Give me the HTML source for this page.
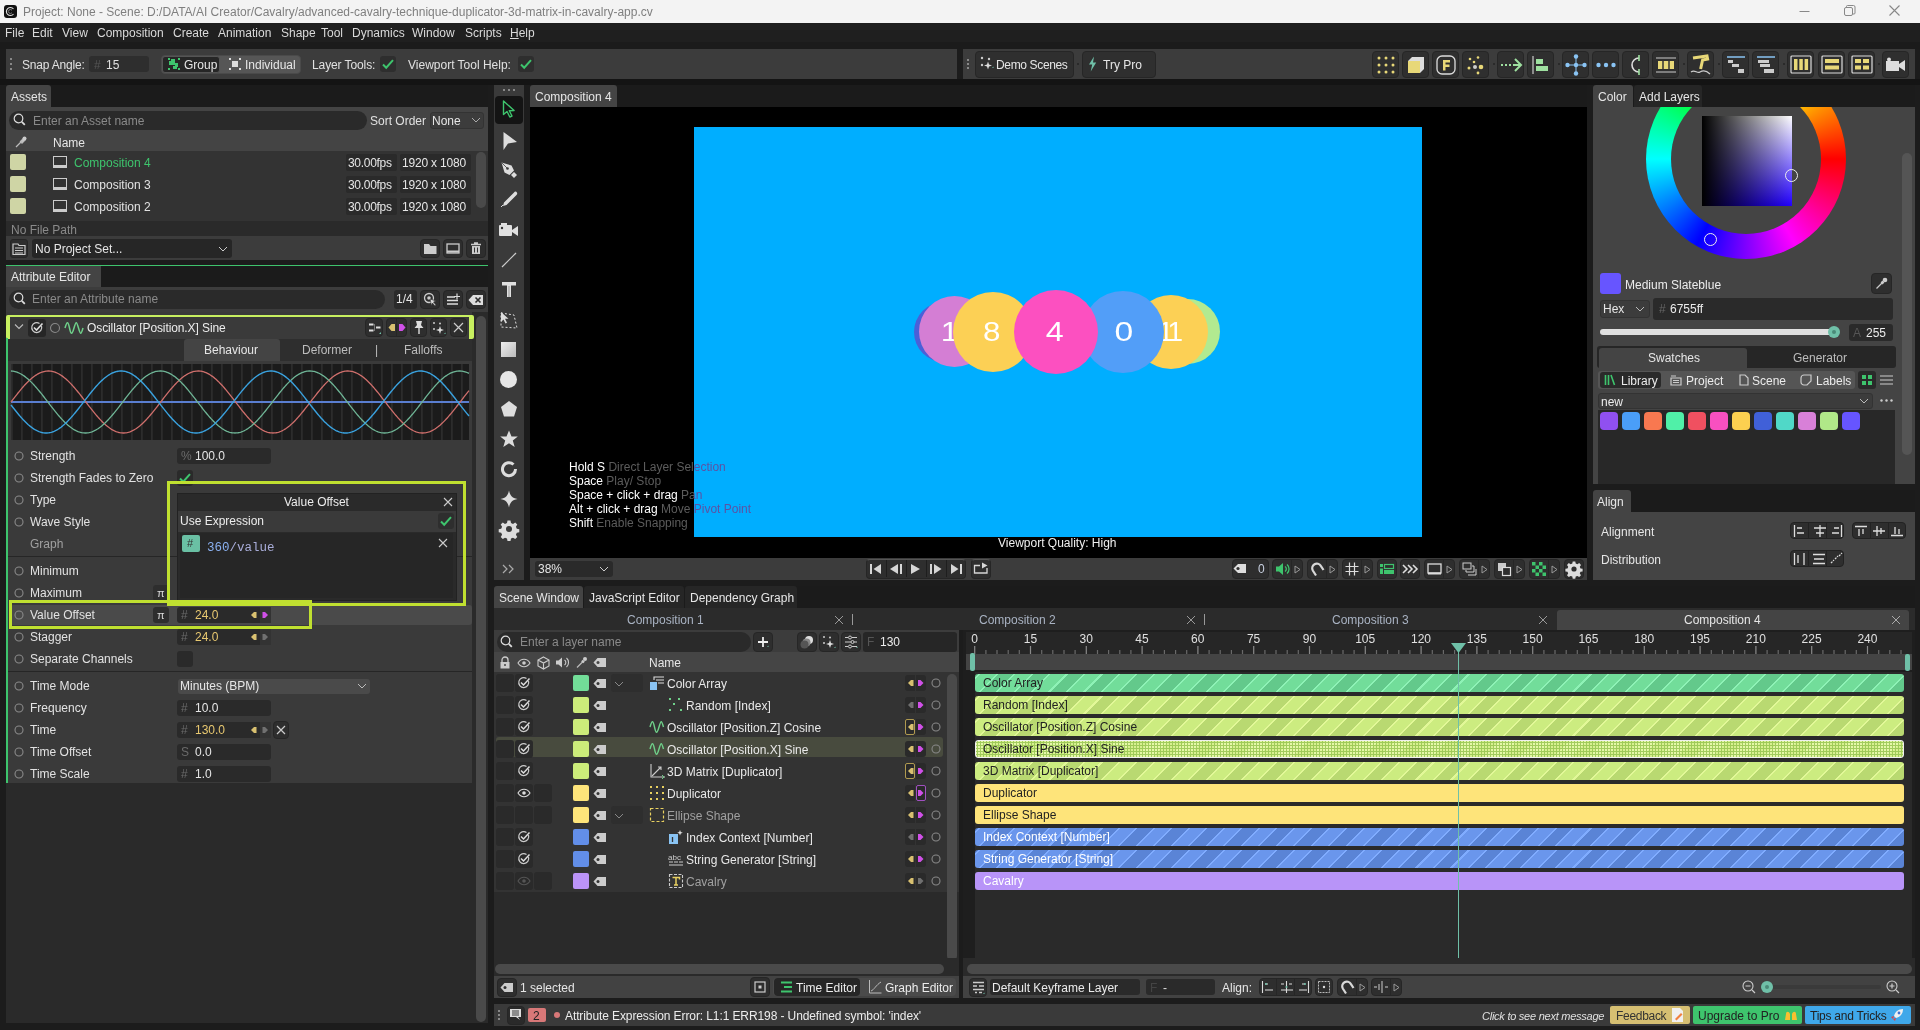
<!DOCTYPE html>
<html><head><meta charset="utf-8">
<style>
*{box-sizing:border-box;margin:0;padding:0}
html,body{width:1920px;height:1030px;overflow:hidden;background:#1c1c1c;font-family:"Liberation Sans",sans-serif;font-size:12px;color:#e2e2e2}
.a{position:absolute}
.t{position:absolute;white-space:nowrap;line-height:16px}
.dim{color:#8c8c8c}
.btn{position:absolute;background:#2e2e2e;border:1px solid #262626;border-radius:4px}
.inp{position:absolute;background:#2a2a2a;border-radius:3px}
svg{position:absolute;overflow:visible}
</style></head><body>

<!-- TITLE BAR -->
<div class="a" style="left:0;top:0;width:1920px;height:23px;background:#f3f3f3"></div>
<div class="a" style="left:4px;top:5px;width:13px;height:13px;background:#111;border-radius:3px"></div>
<svg style="left:5px;top:6px" width="11" height="11"><path d="M8.5 3a4 4 0 1 0 0 5" fill="none" stroke="#ddd" stroke-width="1.1"/><path d="M7 4.3a2 2 0 1 0 0 2.4" fill="none" stroke="#999" stroke-width="0.8"/></svg>
<div class="t" style="left:23px;top:4px;color:#7f7f7f;font-size:12px">Project: None - Scene: D:/DATA/AI Creator/Cavalry/advanced-cavalry-technique-duplicator-3d-matrix-in-cavalry-app.cv</div>

<!-- MENU -->
<div class="a" style="left:0;top:23px;width:1920px;height:19px;background:#1f1f1f"></div>
<div class="a" style="left:0;top:42px;width:1920px;height:7px;background:#1b1b1b"></div>
<div class="t" style="left:5px;top:25px;color:#dadada">File</div>
<div class="t" style="left:32px;top:25px;color:#dadada">Edit</div>
<div class="t" style="left:62px;top:25px;color:#dadada">View</div>
<div class="t" style="left:97px;top:25px;color:#dadada">Composition</div>
<div class="t" style="left:173px;top:25px;color:#dadada">Create</div>
<div class="t" style="left:218px;top:25px;color:#dadada">Animation</div>
<div class="t" style="left:281px;top:25px;color:#dadada">Shape</div>
<div class="t" style="left:321px;top:25px;color:#dadada">Tool</div>
<div class="t" style="left:352px;top:25px;color:#dadada">Dynamics</div>
<div class="t" style="left:412px;top:25px;color:#dadada">Window</div>
<div class="t" style="left:465px;top:25px;color:#dadada">Scripts</div>
<div class="t" style="left:510px;top:25px;color:#dadada"><u>H</u>elp</div>
<svg style="left:1799px;top:5px" width="12" height="12"><path d="M0.5 6.5h10" stroke="#888" stroke-width="1"/></svg>
<svg style="left:1843px;top:4px" width="14" height="14"><rect x="1.5" y="3.5" width="8" height="8" rx="1.5" fill="none" stroke="#888"/><path d="M3.5 3.5v-1a1 1 0 0 1 1-1h6a1.5 1.5 0 0 1 1.5 1.5v6a1 1 0 0 1-1 1h-1" fill="none" stroke="#888"/></svg>
<svg style="left:1889px;top:5px" width="12" height="12"><path d="M0.5 0.5l10 10M10.5 0.5l-10 10" stroke="#888" stroke-width="1.1"/></svg>

<div class="a" style="left:0;top:79px;width:1920px;height:6px;background:#141414"></div>

<!-- TOOLBARS -->
<div class="a" style="left:6px;top:49px;width:951px;height:30px;background:#3c3c3c"></div>
<div class="a" style="left:963px;top:49px;width:952px;height:30px;background:#3c3c3c"></div>

<!-- left toolbar content -->
<div class="a" style="left:10px;top:58px;width:2px;height:2px;background:#888"></div>
<div class="a" style="left:10px;top:63px;width:2px;height:2px;background:#888"></div>
<div class="a" style="left:10px;top:68px;width:2px;height:2px;background:#888"></div>
<div class="t" style="left:22px;top:57px;color:#e0e0e0;letter-spacing:-0.2px">Snap Angle:</div>
<div class="inp" style="left:89px;top:56px;width:60px;height:16px;background:#2e2e2e"></div>
<div class="t dim" style="left:94px;top:57px;color:#555">#</div>
<div class="t" style="left:106px;top:57px;color:#e0e0e0">15</div>
<div class="a" style="left:161px;top:55px;width:140px;height:19px;background:#565656;border:1px solid #4a4a4a;border-radius:4px"></div>
<div class="a" style="left:162px;top:56px;width:58px;height:17px;background:#262626;border-radius:3px;border:1px solid #555"></div>
<svg style="left:167px;top:57px" width="14" height="14"><path d="M1 1h2v2h-2zM11 1h2v2h-2zM1 11h2v2h-2zM11 11h2v2h-2z" fill="#3ec46d"/><path d="M4 2h4v2h0v4h-2v0h-4v-4h2z" fill="#3ec46d"/><path d="M8 6h3v4h-1v2h-4v-3h2z" fill="#3ec46d"/></svg>
<div class="t" style="left:184px;top:57px;color:#e6e6e6">Group</div>
<svg style="left:228px;top:57px" width="14" height="14"><path d="M1 1h2v2h-2zM11 1h2v2h-2zM1 11h2v2h-2zM11 11h2v2h-2z" fill="#ddd"/><rect x="4" y="4" width="6" height="6" fill="#ddd"/></svg>
<div class="t" style="left:245px;top:57px;color:#e6e6e6">Individual</div>
<div class="t" style="left:312px;top:57px;color:#e0e0e0;letter-spacing:-0.1px">Layer Tools:</div>
<div class="inp" style="left:380px;top:56px;width:16px;height:16px;background:#2e2e2e"></div>
<svg style="left:380px;top:56px" width="16" height="16"><path d="M3 8.5l3.2 3.2 6.8-7.5" fill="none" stroke="#3ec46d" stroke-width="2"/></svg>
<div class="t" style="left:408px;top:57px;color:#e0e0e0">Viewport Tool Help:</div>
<div class="inp" style="left:518px;top:56px;width:16px;height:16px;background:#2e2e2e"></div>
<svg style="left:518px;top:56px" width="16" height="16"><path d="M3 8.5l3.2 3.2 6.8-7.5" fill="none" stroke="#3ec46d" stroke-width="2"/></svg>

<!-- right toolbar content -->
<div class="a" style="left:967px;top:59px;width:2px;height:2px;background:#888"></div>
<div class="a" style="left:967px;top:63px;width:2px;height:2px;background:#888"></div>
<div class="a" style="left:967px;top:67px;width:2px;height:2px;background:#888"></div>
<div class="btn" style="left:975px;top:51px;width:99px;height:27px;background:#2f2f2f"></div>
<svg style="left:980px;top:56px" width="14" height="16"><circle cx="2" cy="2" r="1.2" fill="#ccc"/><circle cx="9" cy="3" r="1.2" fill="#ccc"/><circle cx="2" cy="9" r="1.2" fill="#ccc"/><path d="M8 5.5l1 3 3 1-3 1-1 3-1-3-3-1 3-1z" fill="#ddd"/><path d="M12 12l1.5-1.5v1.5z" fill="#6fc0a8"/></svg>
<div class="t" style="left:996px;top:57px;color:#e6e6e6;letter-spacing:-0.35px">Demo Scenes</div>
<div class="a" style="left:1077px;top:63px;width:2px;height:2px;background:#2a2a2a"></div>
<div class="btn" style="left:1082px;top:51px;width:74px;height:27px;background:#2f2f2f"></div>
<svg style="left:1088px;top:56px" width="10" height="16"><path d="M6 0.5l-5 8h3.2l-1.5 7 5.5-9h-3.2z" fill="#6fc0a8"/></svg>
<div class="t" style="left:1103px;top:57px;color:#e6e6e6">Try Pro</div>
<div class="btn" style="left:1372px;top:51px;width:27px;height:27px;background:#2f2f2f"></div>
<div class="btn" style="left:1402px;top:51px;width:27px;height:27px;background:#2f2f2f"></div>
<div class="btn" style="left:1432px;top:51px;width:27px;height:27px;background:#2f2f2f"></div>
<div class="btn" style="left:1462px;top:51px;width:27px;height:27px;background:#2f2f2f"></div>
<div class="btn" style="left:1497px;top:51px;width:27px;height:27px;background:#2f2f2f"></div>
<div class="btn" style="left:1527px;top:51px;width:27px;height:27px;background:#2f2f2f"></div>
<div class="btn" style="left:1562px;top:51px;width:27px;height:27px;background:#2f2f2f"></div>
<div class="btn" style="left:1592px;top:51px;width:27px;height:27px;background:#2f2f2f"></div>
<div class="btn" style="left:1622px;top:51px;width:27px;height:27px;background:#2f2f2f"></div>
<div class="btn" style="left:1652px;top:51px;width:27px;height:27px;background:#2f2f2f"></div>
<div class="btn" style="left:1687px;top:51px;width:27px;height:27px;background:#2f2f2f"></div>
<div class="btn" style="left:1722px;top:51px;width:27px;height:27px;background:#2f2f2f"></div>
<div class="btn" style="left:1752px;top:51px;width:27px;height:27px;background:#2f2f2f"></div>
<div class="btn" style="left:1787px;top:51px;width:27px;height:27px;background:#2f2f2f"></div>
<div class="btn" style="left:1818px;top:51px;width:27px;height:27px;background:#2f2f2f"></div>
<div class="btn" style="left:1848px;top:51px;width:27px;height:27px;background:#2f2f2f"></div>
<div class="btn" style="left:1882px;top:51px;width:27px;height:27px;background:#2f2f2f"></div>
<div class="a" style="left:1493px;top:63px;width:2px;height:2px;background:#2a2a2a"></div>
<div class="a" style="left:1558px;top:63px;width:2px;height:2px;background:#2a2a2a"></div>
<div class="a" style="left:1683px;top:63px;width:2px;height:2px;background:#2a2a2a"></div>
<div class="a" style="left:1718px;top:63px;width:2px;height:2px;background:#2a2a2a"></div>
<div class="a" style="left:1783px;top:63px;width:2px;height:2px;background:#2a2a2a"></div>
<div class="a" style="left:1878px;top:63px;width:2px;height:2px;background:#2a2a2a"></div>

<svg style="left:1376px;top:55px" width="20" height="20"><g fill="#e8d878"><circle cx="3" cy="3" r="1.5"/><circle cx="10" cy="3" r="1.5"/><circle cx="17" cy="3" r="1.5"/><circle cx="3" cy="10" r="1.5"/><circle cx="10" cy="10" r="1.5"/><circle cx="17" cy="10" r="1.5"/><circle cx="3" cy="17" r="1.5"/><circle cx="10" cy="17" r="1.5"/><circle cx="17" cy="17" r="1.5"/></g></svg>
<svg style="left:1406px;top:55px" width="20" height="20"><path d="M2 6h12v12h-12z" fill="#e8d878"/><path d="M2 6l4-4h12l-4 4zM14 6l4-4v12l-4 4z" fill="#ddd"/></svg>
<svg style="left:1436px;top:55px" width="20" height="20"><rect x="1" y="1" width="18" height="18" rx="5" fill="none" stroke="#ddd" stroke-width="1.3"/><path d="M7 5h7v2.5h-4.5v2h4v2.5h-4v3.5h-2.5z" fill="#e8d878"/></svg>
<svg style="left:1466px;top:55px" width="20" height="20"><g fill="#e8d878"><circle cx="4" cy="4" r="1.3"/><circle cx="12" cy="2.5" r="1.3"/><circle cx="8" cy="7" r="1.3"/><circle cx="3" cy="13" r="1.5"/><circle cx="15" cy="12" r="2.3"/><circle cx="12" cy="18" r="1.4"/></g><circle cx="9" cy="12" r="2" fill="#ccc"/></svg>
<svg style="left:1500px;top:55px" width="22" height="20"><path d="M1 10h2M5 10h2M9 10h2M13 10h7M15 4l6 6-6 6" fill="none" stroke="#9ee0a0" stroke-width="2"/></svg>
<svg style="left:1531px;top:55px" width="20" height="20"><path d="M2 1v18" stroke="#ccc" stroke-width="1.2"/><path d="M5 4h7v5h-7zM5 11h12v5h-12z" fill="#9ee0a0"/></svg>
<svg style="left:1565px;top:54px" width="22" height="22"><g fill="#8ac4f4"><circle cx="11" cy="2.5" r="2.2"/><circle cx="11" cy="19.5" r="2.2"/><circle cx="2.5" cy="11" r="2.2"/><circle cx="19.5" cy="11" r="2.2"/><circle cx="11" cy="11" r="2.2"/></g><path d="M11 4v14M4 11h14" stroke="#8ac4f4" stroke-width="1"/></svg>
<svg style="left:1595px;top:55px" width="22" height="20"><g fill="#8ac4f4"><circle cx="3.5" cy="10" r="2.2"/><circle cx="11" cy="10" r="2.2"/><circle cx="18.5" cy="10" r="2.2"/></g></svg>
<svg style="left:1628px;top:54px" width="16" height="22"><path d="M11 4a7 7 0 0 0 0 14" fill="none" stroke="#ddd" stroke-width="1.6"/><path d="M11 1v6M11 15v6" stroke="#9ee0a0" stroke-width="1.6"/></svg>
<svg style="left:1655px;top:56px" width="22" height="18"><path d="M1 2h20M1 16h20" stroke="#ccc" stroke-width="1"/><path d="M3 5h16v8h-16z" fill="#e8d878"/><path d="M8 5v8M14 5v8" stroke="#333" stroke-width="1.5"/></svg>
<svg style="left:1690px;top:54px" width="22" height="22"><path d="M3 4l14-2 0.6 3-5 1-2 9" fill="none" stroke="#e8d878" stroke-width="3"/><path d="M1 18c4-3 6 2 9 0s6-2 10 2" fill="none" stroke="#ccc" stroke-width="1.2"/></svg>
<svg style="left:1726px;top:54px" width="20" height="22"><path d="M1 3h18" stroke="#8ac4f4" stroke-width="1.5"/><path d="M2 6h5v3h-5zM6 10h7v3h-7zM12 15h6v4h-6z" fill="#ccc"/></svg>
<svg style="left:1756px;top:54px" width="20" height="22"><path d="M1 3h18" stroke="#8ac4f4" stroke-width="1.5"/><path d="M2 6h11v3h-11zM4 10h10v3h-10zM8 15h10v4h-10z" fill="#ccc"/></svg>
<svg style="left:1790px;top:55px" width="22" height="20"><rect x="1" y="1" width="20" height="17" rx="1" fill="none" stroke="#ddd" stroke-width="1.2"/><path d="M4 4h3.5v11h-3.5zM9.3 4h3.5v11h-3.5zM14.6 4h3.5v11h-3.5z" fill="#e8d878"/></svg>
<svg style="left:1821px;top:55px" width="22" height="20"><rect x="1" y="1" width="20" height="17" rx="1" fill="none" stroke="#ddd" stroke-width="1.2"/><path d="M4 4h14v4h-14zM4 10.5h14v4h-14z" fill="#e8d878"/></svg>
<svg style="left:1851px;top:55px" width="22" height="20"><rect x="1" y="1" width="20" height="17" rx="1" fill="none" stroke="#ddd" stroke-width="1.2"/><path d="M4 4h6v4h-6zM12 4h6v4h-6zM4 10.5h6v4h-6zM12 10.5h6v4h-6z" fill="#e8d878"/></svg>
<svg style="left:1885px;top:57px" width="22" height="16"><path d="M1 4h13v10h-13z" fill="#ddd"/><path d="M14 7l6-4v11l-6-4z" fill="#ddd"/><circle cx="4" cy="2.5" r="2" fill="#ddd"/></svg>


<!-- LEFT PANEL: ASSETS -->
<div class="a" style="left:6px;top:85px;width:482px;height:22px;background:#1b1b1b"></div>
<div class="a" style="left:6px;top:85px;width:45px;height:22px;background:#444;border-radius:3px 3px 0 0"></div>
<div class="a" style="left:6px;top:107px;width:482px;height:153px;background:#444"></div>
<div class="a" style="left:6px;top:151px;width:482px;height:70px;background:#333"></div>
<div class="a" style="left:6px;top:221px;width:482px;height:15px;background:#2a2a2a"></div>
<div class="a" style="left:6px;top:236px;width:482px;height:24px;background:#3c3c3c"></div>

<!-- assets content -->
<div class="t" style="left:11px;top:89px;color:#e6e6e6">Assets</div>
<div class="a" style="left:9px;top:111px;width:358px;height:19px;background:#2a2a2a;border-radius:10px"></div>
<svg style="left:13px;top:113px" width="14" height="14"><circle cx="5.5" cy="5.5" r="4.3" fill="none" stroke="#ddd" stroke-width="1.2"/><path d="M8.8 8.8l3 3" stroke="#ddd" stroke-width="1.8"/></svg>
<div class="t" style="left:33px;top:113px;color:#8a8a8a">Enter an Asset name</div>
<div class="t" style="left:370px;top:113px;color:#e0e0e0">Sort Order</div>
<div class="a" style="left:430px;top:112px;width:54px;height:17px;background:#3c3c3c;border:1px solid #333;border-radius:3px"></div>
<div class="t" style="left:432px;top:113px;color:#e6e6e6">None</div>
<svg style="left:471px;top:117px" width="10" height="6"><path d="M1 1l4 4 4-4" fill="none" stroke="#aaa" stroke-width="1"/></svg>
<svg style="left:14px;top:136px" width="13" height="13"><path d="M2 11l6-6M9.5 2.5l1.5 1.5-3 3-1.5-1.5z" fill="#ccc" stroke="#bbb" stroke-width="1.3"/><circle cx="10.5" cy="2.5" r="2" fill="#ccc"/></svg>
<div class="t" style="left:53px;top:135px;color:#e6e6e6">Name</div>
<div class="a" style="left:10px;top:154px;width:16px;height:16px;background:#cfd5a5;border-radius:2px"></div>
<div class="a" style="left:53px;top:156px;width:14px;height:12px;border:1px solid #ccc;border-bottom:3px solid #ccc;background:#333"></div>
<div class="t" style="left:74px;top:155px;color:#3ec46d">Composition 4</div>
<div class="a" style="left:346px;top:154px;width:51px;height:17px;background:#2a2a2a;border-radius:2px"></div>
<div class="t" style="left:348px;top:155px;color:#e6e6e6;letter-spacing:-0.3px">30.00fps</div>
<div class="a" style="left:400px;top:154px;width:71px;height:17px;background:#2a2a2a;border-radius:2px"></div>
<div class="t" style="left:402px;top:155px;color:#e6e6e6;letter-spacing:-0.2px">1920 x 1080</div>
<div class="a" style="left:10px;top:176px;width:16px;height:16px;background:#cfd5a5;border-radius:2px"></div>
<div class="a" style="left:53px;top:178px;width:14px;height:12px;border:1px solid #ccc;border-bottom:3px solid #ccc;background:#333"></div>
<div class="t" style="left:74px;top:177px;color:#e2e2e2">Composition 3</div>
<div class="a" style="left:346px;top:176px;width:51px;height:17px;background:#2a2a2a;border-radius:2px"></div>
<div class="t" style="left:348px;top:177px;color:#e6e6e6;letter-spacing:-0.3px">30.00fps</div>
<div class="a" style="left:400px;top:176px;width:71px;height:17px;background:#2a2a2a;border-radius:2px"></div>
<div class="t" style="left:402px;top:177px;color:#e6e6e6;letter-spacing:-0.2px">1920 x 1080</div>
<div class="a" style="left:10px;top:198px;width:16px;height:16px;background:#cfd5a5;border-radius:2px"></div>
<div class="a" style="left:53px;top:200px;width:14px;height:12px;border:1px solid #ccc;border-bottom:3px solid #ccc;background:#333"></div>
<div class="t" style="left:74px;top:199px;color:#e2e2e2">Composition 2</div>
<div class="a" style="left:346px;top:198px;width:51px;height:17px;background:#2a2a2a;border-radius:2px"></div>
<div class="t" style="left:348px;top:199px;color:#e6e6e6;letter-spacing:-0.3px">30.00fps</div>
<div class="a" style="left:400px;top:198px;width:71px;height:17px;background:#2a2a2a;border-radius:2px"></div>
<div class="t" style="left:402px;top:199px;color:#e6e6e6;letter-spacing:-0.2px">1920 x 1080</div>
<div class="a" style="left:476px;top:152px;width:10px;height:56px;background:#4a4a4a;border-radius:5px"></div>
<div class="t" style="left:11px;top:222px;color:#8a8a8a">No File Path</div>
<div class="a" style="left:10px;top:239px;width:18px;height:19px;background:#2e2e2e;border:1px solid #262626;border-radius:3px"></div>
<svg style="left:12px;top:242px" width="14" height="14"><path d="M1 2h5l1 1.5h6v9h-12z" fill="none" stroke="#ccc" stroke-width="1.2"/><path d="M3 6h8M3 8.5h8M3 11h8" stroke="#ccc" stroke-width="1"/></svg>
<div class="a" style="left:32px;top:239px;width:200px;height:19px;background:#262626;border-radius:3px"></div>
<div class="t" style="left:35px;top:241px;color:#e6e6e6">No Project Set...</div>
<svg style="left:218px;top:246px" width="10" height="6"><path d="M1 1l4 4 4-4" fill="none" stroke="#ccc" stroke-width="1"/></svg>
<div class="btn" style="left:420px;top:239px;width:20px;height:19px"></div>
<svg style="left:423px;top:242px" width="14" height="13"><path d="M1 2h5l1.5 2h6v8h-12.5z" fill="#ccc"/></svg>
<div class="btn" style="left:443px;top:239px;width:20px;height:19px"></div>
<svg style="left:446px;top:243px" width="14" height="11"><rect x="1" y="1" width="12" height="9" fill="none" stroke="#ccc" stroke-width="1.3"/><path d="M1 8.5h12" stroke="#ccc" stroke-width="2"/></svg>
<div class="btn" style="left:466px;top:239px;width:20px;height:19px"></div>
<svg style="left:470px;top:242px" width="12" height="13"><path d="M1 2.5h10M4 1h4" stroke="#ccc" stroke-width="1.3"/><path d="M2 4h8v8h-8z" fill="#ccc"/><path d="M4.5 5.5v5M7.5 5.5v5" stroke="#333" stroke-width="1"/></svg>


<!-- LEFT PANEL: ATTRIBUTE EDITOR -->
<div class="a" style="left:6px;top:265px;width:482px;height:22px;background:#1b1b1b"></div>
<div class="a" style="left:6px;top:266px;width:95px;height:21px;background:#444"></div>
<div class="a" style="left:6px;top:287px;width:482px;height:736px;background:#2a2a2a"></div>
<div class="a" style="left:6px;top:287px;width:482px;height:25px;background:#3c3c3c"></div>
<div class="a" style="left:6px;top:312px;width:466px;height:471px;background:#3a3a3a"></div>

<!-- attribute editor content -->
<div class="a" style="left:6px;top:265px;width:482px;height:1px;background:#3ec46d"></div>
<div class="t" style="left:11px;top:269px;color:#e6e6e6">Attribute Editor</div>
<div class="a" style="left:9px;top:290px;width:376px;height:19px;background:#2a2a2a;border-radius:10px"></div>
<svg style="left:13px;top:292px" width="14" height="14"><circle cx="5.5" cy="5.5" r="4.3" fill="none" stroke="#ddd" stroke-width="1.2"/><path d="M8.8 8.8l3 3" stroke="#ddd" stroke-width="1.8"/></svg>
<div class="t" style="left:32px;top:291px;color:#8a8a8a">Enter an Attribute name</div>
<div class="a" style="left:394px;top:290px;width:23px;height:19px;background:#2a2a2a;border-radius:3px"></div>
<div class="t" style="left:396px;top:291px;color:#e6e6e6">1/4</div>
<div class="btn" style="left:420px;top:290px;width:20px;height:19px"></div>
<svg style="left:423px;top:292px" width="15" height="15"><circle cx="6" cy="6" r="4.5" fill="none" stroke="#ccc" stroke-width="1.3"/><circle cx="6" cy="6" r="1.8" fill="#ccc"/><path d="M7 7l6 2-2.5 1 2.5 3-1 1-2.5-3-1 2.5z" fill="#ddd" stroke="#2e2e2e" stroke-width="0.6"/></svg>
<div class="btn" style="left:443px;top:290px;width:20px;height:19px"></div>
<svg style="left:446px;top:293px" width="15" height="13"><path d="M1 4h8M1 7.5h11M1 11h11" stroke="#ddd" stroke-width="1.6"/><path d="M11 0.5v6M8 3.5h6" stroke="#ddd" stroke-width="1.2"/></svg>
<div class="btn" style="left:466px;top:290px;width:20px;height:19px"></div>
<svg style="left:468px;top:294px" width="16" height="12"><path d="M5 1h10v10h-10l-4.5-5z" fill="#ddd"/><path d="M7.5 3.5l5 5M12.5 3.5l-5 5" stroke="#2e2e2e" stroke-width="1.6"/></svg>

<!-- oscillator header -->
<div class="a" style="left:6px;top:315px;width:468px;height:24px;background:#c8f060;border-radius:2px"></div>
<div class="a" style="left:10px;top:317px;width:459px;height:22px;background:#3a3a3a"></div>
<svg style="left:14px;top:323px" width="10" height="8"><path d="M1 1.5l4 4 4-4" fill="none" stroke="#bbb" stroke-width="1.1"/></svg>
<div class="a" style="left:28px;top:319px;width:18px;height:18px;background:#262626;border-radius:3px"></div>
<svg style="left:30px;top:321px" width="14" height="14"><path d="M11.5 5a5 5 0 1 1-2-2.6" fill="none" stroke="#ccc" stroke-width="1.2"/><path d="M4 6.5l2.5 2.5 6-6.5" fill="none" stroke="#ddd" stroke-width="1.6"/></svg>
<svg style="left:49px;top:322px" width="12" height="12"><circle cx="6" cy="6" r="4.5" fill="none" stroke="#888" stroke-width="1.1"/></svg>
<svg style="left:64px;top:321px" width="20" height="14"><path d="M1 7c2-7 3-7 4.5 0s2.5 7 4.5 0 2.5-7 4.5 0 2.5 7 4.5 0" fill="none" stroke="#6fd08a" stroke-width="1.5"/></svg>
<div class="t" style="left:87px;top:320px;color:#ececec;letter-spacing:-0.1px">Oscillator [Position.X] Sine</div>
<div class="btn" style="left:365px;top:318px;width:18px;height:19px"></div>
<svg style="left:367px;top:321px" width="15" height="14"><path d="M2 3.5h4.5M2 9.5h4.5M9 6.5h4.5" stroke="#ddd" stroke-width="2"/><path d="M7.5 3v7" stroke="#777" stroke-width="1"/><path d="M12 13l2-2v2z" fill="#6fc0a8"/></svg>
<div class="btn" style="left:386px;top:318px;width:21px;height:19px;background:#2e2e2e"></div>
<div class="a" style="left:396px;top:319px;width:1px;height:17px;background:#262626"></div><svg style="left:388px;top:323px" width="18" height="9"><path d="M0.5 4.5l3-3.5h3.5v7h-3.5z" fill="#d8c070"/><path d="M17.5 4.5l-3-3.5h-3.5v7h3.5z" fill="#d050e8"/></svg>
<div class="btn" style="left:410px;top:318px;width:17px;height:19px"></div>
<svg style="left:413px;top:320px" width="12" height="15"><path d="M3 1h6l-1 4 2.5 3h-9l2.5-3z" fill="#ddd"/><path d="M6 8v6" stroke="#ddd" stroke-width="1.4"/></svg>
<div class="btn" style="left:430px;top:318px;width:17px;height:19px"></div>
<svg style="left:432px;top:321px" width="14" height="14"><circle cx="2" cy="2" r="1" fill="#ccc"/><circle cx="8" cy="2.5" r="1" fill="#ccc"/><circle cx="2" cy="8" r="1" fill="#ccc"/><path d="M8 5l1 3 3 1-3 1-1 3-1-3-3-1 3-1z" fill="#ddd"/><path d="M12 13l1.5-1.5v1.5z" fill="#6fc0a8"/></svg>
<div class="btn" style="left:450px;top:318px;width:17px;height:19px"></div>
<svg style="left:453px;top:322px" width="11" height="11"><path d="M1 1l9 9M10 1l-9 9" stroke="#ccc" stroke-width="1.2"/></svg>

<div class="a" style="left:6px;top:338px;width:2px;height:445px;background:#3ec46d"></div>
<div class="a" style="left:8px;top:339px;width:464px;height:22px;background:#2e2e2e"></div>
<div class="a" style="left:184px;top:339px;width:96px;height:22px;background:#444;border-radius:3px 3px 0 0"></div>
<div class="t" style="left:204px;top:342px;color:#e6e6e6">Behaviour</div>
<div class="t" style="left:302px;top:342px;color:#bdbdbd">Deformer</div>
<div class="t" style="left:375px;top:342px;color:#bdbdbd">|</div>
<div class="t" style="left:404px;top:342px;color:#bdbdbd">Falloffs</div>
<div class="a" style="left:8px;top:361px;width:464px;height:86px;background:#3a3a3a"></div>
<svg style="left:11px;top:364px" width="458" height="76"><rect width="458" height="76" fill="#1b1b1b"/><rect x="0.00" y="0" width="1.8" height="76" fill="#2c2c2c"/><rect x="10.00" y="0" width="1.8" height="76" fill="#2c2c2c"/><rect x="20.00" y="0" width="1.8" height="76" fill="#2c2c2c"/><rect x="30.00" y="0" width="1.8" height="76" fill="#2c2c2c"/><rect x="40.00" y="0" width="1.8" height="76" fill="#2c2c2c"/><rect x="50.00" y="0" width="1.8" height="76" fill="#2c2c2c"/><rect x="60.00" y="0" width="1.8" height="76" fill="#2c2c2c"/><rect x="70.00" y="0" width="1.8" height="76" fill="#2c2c2c"/><rect x="80.00" y="0" width="1.8" height="76" fill="#2c2c2c"/><rect x="90.00" y="0" width="1.8" height="76" fill="#2c2c2c"/><rect x="100.00" y="0" width="1.8" height="76" fill="#2c2c2c"/><rect x="110.00" y="0" width="1.8" height="76" fill="#2c2c2c"/><rect x="120.00" y="0" width="1.8" height="76" fill="#2c2c2c"/><rect x="130.00" y="0" width="1.8" height="76" fill="#2c2c2c"/><rect x="140.00" y="0" width="1.8" height="76" fill="#2c2c2c"/><rect x="150.00" y="0" width="1.8" height="76" fill="#2c2c2c"/><rect x="160.00" y="0" width="1.8" height="76" fill="#2c2c2c"/><rect x="170.00" y="0" width="1.8" height="76" fill="#2c2c2c"/><rect x="180.00" y="0" width="1.8" height="76" fill="#2c2c2c"/><rect x="190.00" y="0" width="1.8" height="76" fill="#2c2c2c"/><rect x="200.00" y="0" width="1.8" height="76" fill="#2c2c2c"/><rect x="210.00" y="0" width="1.8" height="76" fill="#2c2c2c"/><rect x="220.00" y="0" width="1.8" height="76" fill="#2c2c2c"/><rect x="230.00" y="0" width="1.8" height="76" fill="#2c2c2c"/><rect x="240.00" y="0" width="1.8" height="76" fill="#2c2c2c"/><rect x="250.00" y="0" width="1.8" height="76" fill="#2c2c2c"/><rect x="260.00" y="0" width="1.8" height="76" fill="#2c2c2c"/><rect x="270.00" y="0" width="1.8" height="76" fill="#2c2c2c"/><rect x="280.00" y="0" width="1.8" height="76" fill="#2c2c2c"/><rect x="290.00" y="0" width="1.8" height="76" fill="#2c2c2c"/><rect x="300.00" y="0" width="1.8" height="76" fill="#2c2c2c"/><rect x="310.00" y="0" width="1.8" height="76" fill="#2c2c2c"/><rect x="320.00" y="0" width="1.8" height="76" fill="#2c2c2c"/><rect x="330.00" y="0" width="1.8" height="76" fill="#2c2c2c"/><rect x="340.00" y="0" width="1.8" height="76" fill="#2c2c2c"/><rect x="350.00" y="0" width="1.8" height="76" fill="#2c2c2c"/><rect x="360.00" y="0" width="1.8" height="76" fill="#2c2c2c"/><rect x="370.00" y="0" width="1.8" height="76" fill="#2c2c2c"/><rect x="380.00" y="0" width="1.8" height="76" fill="#2c2c2c"/><rect x="390.00" y="0" width="1.8" height="76" fill="#2c2c2c"/><rect x="400.00" y="0" width="1.8" height="76" fill="#2c2c2c"/><rect x="410.00" y="0" width="1.8" height="76" fill="#2c2c2c"/><rect x="420.00" y="0" width="1.8" height="76" fill="#2c2c2c"/><rect x="430.00" y="0" width="1.8" height="76" fill="#2c2c2c"/><rect x="440.00" y="0" width="1.8" height="76" fill="#2c2c2c"/><rect x="450.00" y="0" width="1.8" height="76" fill="#2c2c2c"/>
<path d="M0 38h458" stroke="#5a7ed0" stroke-width="2.2"/>
<path d="M0,38.00 L1,36.70 L2,35.40 L3,34.11 L4,32.82 L5,31.54 L6,30.28 L7,29.02 L8,27.79 L9,26.57 L10,25.37 L11,24.19 L12,23.04 L13,21.91 L14,20.81 L15,19.75 L16,18.71 L17,17.71 L18,16.74 L19,15.82 L20,14.93 L21,14.08 L22,13.27 L23,12.51 L24,11.79 L25,11.12 L26,10.50 L27,9.92 L28,9.39 L29,8.92 L30,8.49 L31,8.12 L32,7.80 L33,7.53 L34,7.32 L35,7.16 L36,7.06 L37,7.00 L38,7.01 L39,7.07 L40,7.18 L41,7.35 L42,7.57 L43,7.84 L44,8.17 L45,8.55 L46,8.99 L47,9.47 L48,10.00 L49,10.59 L50,11.22 L51,11.90 L52,12.62 L53,13.39 L54,14.20 L55,15.06 L56,15.95 L57,16.89 L58,17.86 L59,18.86 L60,19.91 L61,20.98 L62,22.08 L63,23.21 L64,24.37 L65,25.55 L66,26.75 L67,27.97 L68,29.21 L69,30.46 L70,31.73 L71,33.01 L72,34.30 L73,35.60 L74,36.89 L75,38.20 L76,39.50 L77,40.79 L78,42.09 L79,43.37 L80,44.65 L81,45.91 L82,47.16 L83,48.40 L84,49.61 L85,50.81 L86,51.98 L87,53.13 L88,54.25 L89,55.35 L90,56.41 L91,57.44 L92,58.44 L93,59.40 L94,60.32 L95,61.20 L96,62.04 L97,62.84 L98,63.60 L99,64.31 L100,64.98 L101,65.59 L102,66.16 L103,66.68 L104,67.15 L105,67.57 L106,67.93 L107,68.24 L108,68.50 L109,68.71 L110,68.86 L111,68.96 L112,69.00 L113,68.99 L114,68.92 L115,68.80 L116,68.62 L117,68.39 L118,68.11 L119,67.77 L120,67.38 L121,66.94 L122,66.45 L123,65.91 L124,65.32 L125,64.68 L126,64.00 L127,63.27 L128,62.49 L129,61.67 L130,60.81 L131,59.91 L132,58.97 L133,57.99 L134,56.98 L135,55.94 L136,54.86 L137,53.75 L138,52.62 L139,51.46 L140,50.28 L141,49.07 L142,47.85 L143,46.60 L144,45.35 L145,44.08 L146,42.79 L147,41.51 L148,40.21 L149,38.91 L150,37.61 L151,36.31 L152,35.01 L153,33.72 L154,32.44 L155,31.16 L156,29.90 L157,28.65 L158,27.42 L159,26.20 L160,25.01 L161,23.84 L162,22.70 L163,21.58 L164,20.49 L165,19.43 L166,18.41 L167,17.42 L168,16.46 L169,15.55 L170,14.67 L171,13.83 L172,13.04 L173,12.29 L174,11.59 L175,10.93 L176,10.32 L177,9.76 L178,9.25 L179,8.79 L180,8.38 L181,8.02 L182,7.71 L183,7.46 L184,7.27 L185,7.12 L186,7.03 L187,7.00 L188,7.02 L189,7.10 L190,7.23 L191,7.41 L192,7.65 L193,7.94 L194,8.28 L195,8.68 L196,9.13 L197,9.62 L198,10.17 L199,10.77 L200,11.42 L201,12.11 L202,12.85 L203,13.63 L204,14.46 L205,15.32 L206,16.23 L207,17.17 L208,18.16 L209,19.17 L210,20.22 L211,21.30 L212,22.42 L213,23.55 L214,24.72 L215,25.90 L216,27.11 L217,28.34 L218,29.58 L219,30.84 L220,32.12 L221,33.40 L222,34.69 L223,35.98 L224,37.28 L225,38.59 L226,39.89 L227,41.18 L228,42.47 L229,43.76 L230,45.03 L231,46.29 L232,47.54 L233,48.77 L234,49.98 L235,51.17 L236,52.33 L237,53.47 L238,54.59 L239,55.67 L240,56.72 L241,57.74 L242,58.73 L243,59.68 L244,60.59 L245,61.46 L246,62.29 L247,63.08 L248,63.82 L249,64.52 L250,65.17 L251,65.77 L252,66.32 L253,66.83 L254,67.28 L255,67.68 L256,68.03 L257,68.33 L258,68.57 L259,68.76 L260,68.89 L261,68.97 L262,69.00 L263,68.97 L264,68.89 L265,68.75 L266,68.56 L267,68.31 L268,68.01 L269,67.66 L270,67.26 L271,66.80 L272,66.30 L273,65.74 L274,65.13 L275,64.48 L276,63.78 L277,63.04 L278,62.25 L279,61.42 L280,60.54 L281,59.63 L282,58.68 L283,57.69 L284,56.67 L285,55.62 L286,54.53 L287,53.42 L288,52.27 L289,51.11 L290,49.92 L291,48.70 L292,47.47 L293,46.23 L294,44.97 L295,43.69 L296,42.41 L297,41.12 L298,39.82 L299,38.52 L300,37.22 L301,35.92 L302,34.62 L303,33.33 L304,32.05 L305,30.78 L306,29.52 L307,28.28 L308,27.05 L309,25.84 L310,24.66 L311,23.50 L312,22.36 L313,21.25 L314,20.17 L315,19.12 L316,18.11 L317,17.13 L318,16.18 L319,15.28 L320,14.41 L321,13.59 L322,12.81 L323,12.07 L324,11.38 L325,10.74 L326,10.14 L327,9.60 L328,9.10 L329,8.66 L330,8.26 L331,7.92 L332,7.63 L333,7.40 L334,7.22 L335,7.09 L336,7.02 L337,7.00 L338,7.04 L339,7.13 L340,7.27 L341,7.47 L342,7.73 L343,8.04 L344,8.40 L345,8.81 L346,9.27 L347,9.78 L348,10.35 L349,10.96 L350,11.62 L351,12.33 L352,13.08 L353,13.87 L354,14.71 L355,15.59 L356,16.51 L357,17.47 L358,18.46 L359,19.49 L360,20.54 L361,21.64 L362,22.75 L363,23.90 L364,25.07 L365,26.26 L366,27.48 L367,28.71 L368,29.96 L369,31.22 L370,32.50 L371,33.78 L372,35.08 L373,36.37 L374,37.67 L375,38.98 L376,40.27 L377,41.57 L378,42.86 L379,44.14 L380,45.41 L381,46.67 L382,47.91 L383,49.13 L384,50.33 L385,51.52 L386,52.68 L387,53.81 L388,54.91 L389,55.99 L390,57.03 L391,58.04 L392,59.02 L393,59.95 L394,60.85 L395,61.71 L396,62.53 L397,63.30 L398,64.03 L399,64.72 L400,65.35 L401,65.94 L402,66.48 L403,66.97 L404,67.41 L405,67.79 L406,68.12 L407,68.41 L408,68.63 L409,68.80 L410,68.92 L411,68.99 L412,69.00 L413,68.95 L414,68.85 L415,68.70 L416,68.49 L417,68.23 L418,67.91 L419,67.55 L420,67.13 L421,66.66 L422,66.13 L423,65.56 L424,64.94 L425,64.28 L426,63.56 L427,62.81 L428,62.00 L429,61.16 L430,60.27 L431,59.35 L432,58.39 L433,57.39 L434,56.36 L435,55.29 L436,54.20 L437,53.08 L438,51.93 L439,50.75 L440,49.55 L441,48.34 L442,47.10 L443,45.85 L444,44.59 L445,43.31 L446,42.02 L447,40.73 L448,39.43 L449,38.13 L450,36.83 L451,35.53 L452,34.24 L453,32.95 L454,31.67 L455,30.40 L456,29.15 L457,27.91 L458,26.69" fill="none" stroke="#cf6f6c" stroke-width="1.3"/>
<path d="M0,7.01 L1,7.07 L2,7.18 L3,7.35 L4,7.57 L5,7.84 L6,8.17 L7,8.55 L8,8.99 L9,9.47 L10,10.00 L11,10.59 L12,11.22 L13,11.90 L14,12.62 L15,13.39 L16,14.20 L17,15.06 L18,15.95 L19,16.89 L20,17.86 L21,18.86 L22,19.91 L23,20.98 L24,22.08 L25,23.21 L26,24.37 L27,25.55 L28,26.75 L29,27.97 L30,29.21 L31,30.46 L32,31.73 L33,33.01 L34,34.30 L35,35.60 L36,36.89 L37,38.20 L38,39.50 L39,40.79 L40,42.09 L41,43.37 L42,44.65 L43,45.91 L44,47.16 L45,48.40 L46,49.61 L47,50.81 L48,51.98 L49,53.13 L50,54.25 L51,55.35 L52,56.41 L53,57.44 L54,58.44 L55,59.40 L56,60.32 L57,61.20 L58,62.04 L59,62.84 L60,63.60 L61,64.31 L62,64.98 L63,65.59 L64,66.16 L65,66.68 L66,67.15 L67,67.57 L68,67.93 L69,68.24 L70,68.50 L71,68.71 L72,68.86 L73,68.96 L74,69.00 L75,68.99 L76,68.92 L77,68.80 L78,68.62 L79,68.39 L80,68.11 L81,67.77 L82,67.38 L83,66.94 L84,66.45 L85,65.91 L86,65.32 L87,64.68 L88,64.00 L89,63.27 L90,62.49 L91,61.67 L92,60.81 L93,59.91 L94,58.97 L95,57.99 L96,56.98 L97,55.94 L98,54.86 L99,53.75 L100,52.62 L101,51.46 L102,50.28 L103,49.07 L104,47.85 L105,46.60 L106,45.35 L107,44.08 L108,42.79 L109,41.51 L110,40.21 L111,38.91 L112,37.61 L113,36.31 L114,35.01 L115,33.72 L116,32.44 L117,31.16 L118,29.90 L119,28.65 L120,27.42 L121,26.20 L122,25.01 L123,23.84 L124,22.70 L125,21.58 L126,20.49 L127,19.43 L128,18.41 L129,17.42 L130,16.46 L131,15.55 L132,14.67 L133,13.83 L134,13.04 L135,12.29 L136,11.59 L137,10.93 L138,10.32 L139,9.76 L140,9.25 L141,8.79 L142,8.38 L143,8.02 L144,7.71 L145,7.46 L146,7.27 L147,7.12 L148,7.03 L149,7.00 L150,7.02 L151,7.10 L152,7.23 L153,7.41 L154,7.65 L155,7.94 L156,8.28 L157,8.68 L158,9.13 L159,9.62 L160,10.17 L161,10.77 L162,11.42 L163,12.11 L164,12.85 L165,13.63 L166,14.46 L167,15.32 L168,16.23 L169,17.17 L170,18.16 L171,19.17 L172,20.22 L173,21.30 L174,22.42 L175,23.55 L176,24.72 L177,25.90 L178,27.11 L179,28.34 L180,29.58 L181,30.84 L182,32.12 L183,33.40 L184,34.69 L185,35.98 L186,37.28 L187,38.59 L188,39.89 L189,41.18 L190,42.47 L191,43.76 L192,45.03 L193,46.29 L194,47.54 L195,48.77 L196,49.98 L197,51.17 L198,52.33 L199,53.47 L200,54.59 L201,55.67 L202,56.72 L203,57.74 L204,58.73 L205,59.68 L206,60.59 L207,61.46 L208,62.29 L209,63.08 L210,63.82 L211,64.52 L212,65.17 L213,65.77 L214,66.32 L215,66.83 L216,67.28 L217,67.68 L218,68.03 L219,68.33 L220,68.57 L221,68.76 L222,68.89 L223,68.97 L224,69.00 L225,68.97 L226,68.89 L227,68.75 L228,68.56 L229,68.31 L230,68.01 L231,67.66 L232,67.26 L233,66.80 L234,66.30 L235,65.74 L236,65.13 L237,64.48 L238,63.78 L239,63.04 L240,62.25 L241,61.42 L242,60.54 L243,59.63 L244,58.68 L245,57.69 L246,56.67 L247,55.62 L248,54.53 L249,53.42 L250,52.27 L251,51.11 L252,49.92 L253,48.70 L254,47.47 L255,46.23 L256,44.97 L257,43.69 L258,42.41 L259,41.12 L260,39.82 L261,38.52 L262,37.22 L263,35.92 L264,34.62 L265,33.33 L266,32.05 L267,30.78 L268,29.52 L269,28.28 L270,27.05 L271,25.84 L272,24.66 L273,23.50 L274,22.36 L275,21.25 L276,20.17 L277,19.12 L278,18.11 L279,17.13 L280,16.18 L281,15.28 L282,14.41 L283,13.59 L284,12.81 L285,12.07 L286,11.38 L287,10.74 L288,10.14 L289,9.60 L290,9.10 L291,8.66 L292,8.26 L293,7.92 L294,7.63 L295,7.40 L296,7.22 L297,7.09 L298,7.02 L299,7.00 L300,7.04 L301,7.13 L302,7.27 L303,7.47 L304,7.73 L305,8.04 L306,8.40 L307,8.81 L308,9.27 L309,9.78 L310,10.35 L311,10.96 L312,11.62 L313,12.33 L314,13.08 L315,13.87 L316,14.71 L317,15.59 L318,16.51 L319,17.47 L320,18.46 L321,19.49 L322,20.54 L323,21.64 L324,22.75 L325,23.90 L326,25.07 L327,26.26 L328,27.48 L329,28.71 L330,29.96 L331,31.22 L332,32.50 L333,33.78 L334,35.08 L335,36.37 L336,37.67 L337,38.98 L338,40.27 L339,41.57 L340,42.86 L341,44.14 L342,45.41 L343,46.67 L344,47.91 L345,49.13 L346,50.33 L347,51.52 L348,52.68 L349,53.81 L350,54.91 L351,55.99 L352,57.03 L353,58.04 L354,59.02 L355,59.95 L356,60.85 L357,61.71 L358,62.53 L359,63.30 L360,64.03 L361,64.72 L362,65.35 L363,65.94 L364,66.48 L365,66.97 L366,67.41 L367,67.79 L368,68.12 L369,68.41 L370,68.63 L371,68.80 L372,68.92 L373,68.99 L374,69.00 L375,68.95 L376,68.85 L377,68.70 L378,68.49 L379,68.23 L380,67.91 L381,67.55 L382,67.13 L383,66.66 L384,66.13 L385,65.56 L386,64.94 L387,64.28 L388,63.56 L389,62.81 L390,62.00 L391,61.16 L392,60.27 L393,59.35 L394,58.39 L395,57.39 L396,56.36 L397,55.29 L398,54.20 L399,53.08 L400,51.93 L401,50.75 L402,49.55 L403,48.34 L404,47.10 L405,45.85 L406,44.59 L407,43.31 L408,42.02 L409,40.73 L410,39.43 L411,38.13 L412,36.83 L413,35.53 L414,34.24 L415,32.95 L416,31.67 L417,30.40 L418,29.15 L419,27.91 L420,26.69 L421,25.49 L422,24.31 L423,23.15 L424,22.02 L425,20.92 L426,19.85 L427,18.81 L428,17.81 L429,16.84 L430,15.91 L431,15.01 L432,14.16 L433,13.35 L434,12.58 L435,11.86 L436,11.19 L437,10.56 L438,9.98 L439,9.44 L440,8.96 L441,8.53 L442,8.16 L443,7.83 L444,7.56 L445,7.34 L446,7.17 L447,7.06 L448,7.01 L449,7.01 L450,7.06 L451,7.17 L452,7.33 L453,7.55 L454,7.81 L455,8.14 L456,8.51 L457,8.94 L458,9.42" fill="none" stroke="#6fb596" stroke-width="1.3"/>
<path d="M0,40.92 L1,42.22 L2,43.50 L3,44.78 L4,46.04 L5,47.29 L6,48.52 L7,49.74 L8,50.93 L9,52.10 L10,53.25 L11,54.36 L12,55.46 L13,56.51 L14,57.54 L15,58.53 L16,59.49 L17,60.41 L18,61.29 L19,62.13 L20,62.92 L21,63.67 L22,64.38 L23,65.04 L24,65.65 L25,66.22 L26,66.73 L27,67.19 L28,67.60 L29,67.96 L30,68.27 L31,68.53 L32,68.73 L33,68.87 L34,68.96 L35,69.00 L36,68.98 L37,68.91 L38,68.78 L39,68.60 L40,68.37 L41,68.08 L42,67.74 L43,67.34 L44,66.90 L45,66.40 L46,65.86 L47,65.26 L48,64.62 L49,63.93 L50,63.19 L51,62.41 L52,61.59 L53,60.72 L54,59.82 L55,58.87 L56,57.89 L57,56.88 L58,55.83 L59,54.75 L60,53.64 L61,52.50 L62,51.34 L63,50.16 L64,48.95 L65,47.72 L66,46.48 L67,45.22 L68,43.95 L69,42.67 L70,41.38 L71,40.08 L72,38.78 L73,37.48 L74,36.18 L75,34.88 L76,33.59 L77,32.31 L78,31.03 L79,29.77 L80,28.53 L81,27.30 L82,26.08 L83,24.89 L84,23.73 L85,22.58 L86,21.47 L87,20.38 L88,19.33 L89,18.31 L90,17.32 L91,16.37 L92,15.46 L93,14.58 L94,13.75 L95,12.96 L96,12.22 L97,11.52 L98,10.87 L99,10.26 L100,9.70 L101,9.20 L102,8.74 L103,8.34 L104,7.99 L105,7.69 L106,7.44 L107,7.25 L108,7.11 L109,7.03 L110,7.00 L111,7.03 L112,7.11 L113,7.24 L114,7.43 L115,7.67 L116,7.97 L117,8.32 L118,8.72 L119,9.17 L120,9.68 L121,10.23 L122,10.83 L123,11.48 L124,12.18 L125,12.92 L126,13.71 L127,14.54 L128,15.41 L129,16.32 L130,17.27 L131,18.26 L132,19.28 L133,20.33 L134,21.41 L135,22.53 L136,23.67 L137,24.83 L138,26.02 L139,27.23 L140,28.46 L141,29.71 L142,30.97 L143,32.24 L144,33.53 L145,34.82 L146,36.11 L147,37.41 L148,38.72 L149,40.02 L150,41.31 L151,42.60 L152,43.88 L153,45.16 L154,46.42 L155,47.66 L156,48.89 L157,50.10 L158,51.28 L159,52.45 L160,53.58 L161,54.70 L162,55.78 L163,56.83 L164,57.84 L165,58.83 L166,59.77 L167,60.68 L168,61.54 L169,62.37 L170,63.15 L171,63.89 L172,64.58 L173,65.23 L174,65.83 L175,66.38 L176,66.87 L177,67.32 L178,67.72 L179,68.06 L180,68.35 L181,68.59 L182,68.77 L183,68.90 L184,68.98 L185,69.00 L186,68.97 L187,68.88 L188,68.73 L189,68.54 L190,68.29 L191,67.98 L192,67.62 L193,67.21 L194,66.75 L195,66.24 L196,65.68 L197,65.07 L198,64.41 L199,63.71 L200,62.96 L201,62.17 L202,61.33 L203,60.45 L204,59.54 L205,58.58 L206,57.59 L207,56.57 L208,55.51 L209,54.42 L210,53.30 L211,52.16 L212,50.99 L213,49.80 L214,48.58 L215,47.35 L216,46.10 L217,44.84 L218,43.56 L219,42.28 L220,40.99 L221,39.69 L222,38.39 L223,37.09 L224,35.79 L225,34.49 L226,33.21 L227,31.92 L228,30.65 L229,29.40 L230,28.15 L231,26.93 L232,25.72 L233,24.54 L234,23.38 L235,22.25 L236,21.14 L237,20.06 L238,19.02 L239,18.01 L240,17.03 L241,16.09 L242,15.19 L243,14.33 L244,13.51 L245,12.73 L246,12.00 L247,11.32 L248,10.68 L249,10.09 L250,9.55 L251,9.06 L252,8.62 L253,8.23 L254,7.89 L255,7.61 L256,7.38 L257,7.20 L258,7.08 L259,7.01 L260,7.00 L261,7.04 L262,7.14 L263,7.29 L264,7.50 L265,7.76 L266,8.07 L267,8.43 L268,8.85 L269,9.32 L270,9.84 L271,10.41 L272,11.02 L273,11.69 L274,12.40 L275,13.16 L276,13.96 L277,14.80 L278,15.68 L279,16.60 L280,17.56 L281,18.56 L282,19.59 L283,20.65 L284,21.75 L285,22.87 L286,24.02 L287,25.19 L288,26.39 L289,27.60 L290,28.84 L291,30.09 L292,31.35 L293,32.63 L294,33.91 L295,35.21 L296,36.50 L297,37.80 L298,39.11 L299,40.40 L300,41.70 L301,42.99 L302,44.27 L303,45.54 L304,46.79 L305,48.03 L306,49.25 L307,50.45 L308,51.63 L309,52.79 L310,53.92 L311,55.02 L312,56.09 L313,57.14 L314,58.14 L315,59.11 L316,60.05 L317,60.94 L318,61.80 L319,62.61 L320,63.38 L321,64.10 L322,64.78 L323,65.41 L324,66.00 L325,66.53 L326,67.01 L327,67.45 L328,67.83 L329,68.16 L330,68.43 L331,68.65 L332,68.82 L333,68.93 L334,68.99 L335,69.00 L336,68.94 L337,68.84 L338,68.68 L339,68.47 L340,68.20 L341,67.88 L342,67.51 L343,67.08 L344,66.61 L345,66.08 L346,65.50 L347,64.88 L348,64.21 L349,63.49 L350,62.73 L351,61.92 L352,61.07 L353,60.18 L354,59.26 L355,58.29 L356,57.29 L357,56.25 L358,55.19 L359,54.09 L360,52.96 L361,51.81 L362,50.63 L363,49.43 L364,48.21 L365,46.98 L366,45.72 L367,44.46 L368,43.18 L369,41.89 L370,40.60 L371,39.30 L372,38.00 L373,36.70 L374,35.40 L375,34.11 L376,32.82 L377,31.54 L378,30.28 L379,29.02 L380,27.79 L381,26.57 L382,25.37 L383,24.19 L384,23.04 L385,21.91 L386,20.81 L387,19.75 L388,18.71 L389,17.71 L390,16.74 L391,15.82 L392,14.93 L393,14.08 L394,13.27 L395,12.51 L396,11.79 L397,11.12 L398,10.50 L399,9.92 L400,9.39 L401,8.92 L402,8.49 L403,8.12 L404,7.80 L405,7.53 L406,7.32 L407,7.16 L408,7.06 L409,7.00 L410,7.01 L411,7.07 L412,7.18 L413,7.35 L414,7.57 L415,7.84 L416,8.17 L417,8.55 L418,8.99 L419,9.47 L420,10.00 L421,10.59 L422,11.22 L423,11.90 L424,12.62 L425,13.39 L426,14.20 L427,15.06 L428,15.95 L429,16.89 L430,17.86 L431,18.86 L432,19.91 L433,20.98 L434,22.08 L435,23.21 L436,24.37 L437,25.55 L438,26.75 L439,27.97 L440,29.21 L441,30.46 L442,31.73 L443,33.01 L444,34.30 L445,35.60 L446,36.89 L447,38.20 L448,39.50 L449,40.79 L450,42.09 L451,43.37 L452,44.65 L453,45.91 L454,47.16 L455,48.40 L456,49.61 L457,50.81 L458,51.98" fill="none" stroke="#3aa2df" stroke-width="1.4"/>
</svg>
<svg style="left:14px;top:451px" width="10" height="10"><circle cx="5" cy="5" r="4" fill="none" stroke="#8a8a8a" stroke-width="1.1"/></svg>
<div class="t" style="left:30px;top:448px;color:#e2e2e2">Strength</div>
<div class="inp" style="left:177px;top:448px;width:94px;height:16px;background:#2a2a2a"></div>
<div class="t" style="left:181px;top:448px;color:#6a6a6a">%</div>
<div class="t" style="left:195px;top:448px;color:#e6e6e6">100.0</div>
<svg style="left:14px;top:473px" width="10" height="10"><circle cx="5" cy="5" r="4" fill="none" stroke="#8a8a8a" stroke-width="1.1"/></svg>
<div class="t" style="left:30px;top:470px;color:#e2e2e2">Strength Fades to Zero</div>
<div class="inp" style="left:177px;top:470px;width:16px;height:16px;background:#2a2a2a"></div>
<svg style="left:177px;top:470px" width="16" height="16"><path d="M3 8.5l3.2 3.2 6.8-7.5" fill="none" stroke="#3ec46d" stroke-width="2"/></svg>
<svg style="left:14px;top:495px" width="10" height="10"><circle cx="5" cy="5" r="4" fill="none" stroke="#8a8a8a" stroke-width="1.1"/></svg>
<div class="t" style="left:30px;top:492px;color:#e2e2e2">Type</div>
<svg style="left:14px;top:517px" width="10" height="10"><circle cx="5" cy="5" r="4" fill="none" stroke="#8a8a8a" stroke-width="1.1"/></svg>
<div class="t" style="left:30px;top:514px;color:#e2e2e2">Wave Style</div>
<div class="t" style="left:30px;top:536px;color:#a0a0a0">Graph</div>
<svg style="left:14px;top:566px" width="10" height="10"><circle cx="5" cy="5" r="4" fill="none" stroke="#8a8a8a" stroke-width="1.1"/></svg>
<div class="t" style="left:30px;top:563px;color:#e2e2e2">Minimum</div>
<svg style="left:14px;top:588px" width="10" height="10"><circle cx="5" cy="5" r="4" fill="none" stroke="#8a8a8a" stroke-width="1.1"/></svg>
<div class="t" style="left:30px;top:585px;color:#e2e2e2">Maximum</div>
<div class="a" style="left:153px;top:585px;width:16px;height:16px;background:#2e2e2e;border-radius:3px"></div>
<div class="t" style="left:157px;top:585px;color:#ddd;font-size:11px">&#960;</div>
<div class="a" style="left:10px;top:605px;width:462px;height:20px;background:#4a4a4a;border-radius:3px"></div>
<svg style="left:14px;top:610px" width="10" height="10"><circle cx="5" cy="5" r="4" fill="none" stroke="#8a8a8a" stroke-width="1.1"/></svg>
<div class="t" style="left:30px;top:607px;color:#e2e2e2">Value Offset</div>
<div class="a" style="left:153px;top:607px;width:16px;height:16px;background:#2e2e2e;border-radius:3px"></div>
<div class="t" style="left:157px;top:607px;color:#ddd;font-size:11px">&#960;</div>
<div class="inp" style="left:177px;top:607px;width:94px;height:16px;background:#2a2a2a"></div>
<div class="t" style="left:181px;top:607px;color:#6a6a6a">#</div>
<div class="t" style="left:195px;top:607px;color:#e8c870">24.0</div>
<div class="a" style="left:260px;top:607px;width:11px;height:16px;background:#333"></div>
<svg style="left:250px;top:611px" width="20" height="8"><path d="M1 4l3-3h2.5v6h-2.5z" fill="#d8c070"/><path d="M18 4l-3-3h-2.5v6h2.5z" fill="#d050e8"/></svg>
<svg style="left:14px;top:632px" width="10" height="10"><circle cx="5" cy="5" r="4" fill="none" stroke="#8a8a8a" stroke-width="1.1"/></svg>
<div class="t" style="left:30px;top:629px;color:#e2e2e2">Stagger</div>
<div class="inp" style="left:177px;top:629px;width:94px;height:16px;background:#2a2a2a"></div>
<div class="t" style="left:181px;top:629px;color:#6a6a6a">#</div>
<div class="t" style="left:195px;top:629px;color:#e8c870">24.0</div>
<div class="a" style="left:260px;top:629px;width:11px;height:16px;background:#333"></div>
<svg style="left:250px;top:633px" width="20" height="8"><path d="M1 4l3-3h2.5v6h-2.5z" fill="#d8c070"/><path d="M18 4l-3-3h-2.5v6h2.5z" fill="#707070"/></svg>
<svg style="left:14px;top:654px" width="10" height="10"><circle cx="5" cy="5" r="4" fill="none" stroke="#8a8a8a" stroke-width="1.1"/></svg>
<div class="t" style="left:30px;top:651px;color:#e2e2e2">Separate Channels</div>
<div class="inp" style="left:177px;top:651px;width:16px;height:16px;background:#2a2a2a"></div>
<svg style="left:14px;top:681px" width="10" height="10"><circle cx="5" cy="5" r="4" fill="none" stroke="#8a8a8a" stroke-width="1.1"/></svg>
<div class="t" style="left:30px;top:678px;color:#e2e2e2">Time Mode</div>
<div class="a" style="left:178px;top:679px;width:192px;height:15px;background:#4a4a4a;border-radius:3px"></div>
<div class="t" style="left:180px;top:678px;color:#e6e6e6">Minutes (BPM)</div>
<svg style="left:357px;top:683px" width="10" height="6"><path d="M1 1l4 4 4-4" fill="none" stroke="#bbb" stroke-width="1"/></svg>
<svg style="left:14px;top:703px" width="10" height="10"><circle cx="5" cy="5" r="4" fill="none" stroke="#8a8a8a" stroke-width="1.1"/></svg>
<div class="t" style="left:30px;top:700px;color:#e2e2e2">Frequency</div>
<div class="inp" style="left:177px;top:700px;width:94px;height:16px;background:#2a2a2a"></div>
<div class="t" style="left:181px;top:700px;color:#6a6a6a">#</div>
<div class="t" style="left:195px;top:700px;color:#e6e6e6">10.0</div>
<svg style="left:14px;top:725px" width="10" height="10"><circle cx="5" cy="5" r="4" fill="none" stroke="#8a8a8a" stroke-width="1.1"/></svg>
<div class="t" style="left:30px;top:722px;color:#e2e2e2">Time</div>
<div class="inp" style="left:177px;top:722px;width:94px;height:16px;background:#2a2a2a"></div>
<div class="t" style="left:181px;top:722px;color:#6a6a6a">#</div>
<div class="t" style="left:195px;top:722px;color:#e8c870">130.0</div>
<div class="a" style="left:260px;top:722px;width:11px;height:16px;background:#333"></div>
<svg style="left:250px;top:726px" width="20" height="8"><path d="M1 4l3-3h2.5v6h-2.5z" fill="#d8c070"/><path d="M18 4l-3-3h-2.5v6h2.5z" fill="#707070"/></svg>
<div class="btn" style="left:273px;top:721px;width:16px;height:18px"></div>
<svg style="left:276px;top:725px" width="10" height="10"><path d="M1 1l8 8M9 1l-8 8" stroke="#ccc" stroke-width="1.2"/></svg>
<svg style="left:14px;top:747px" width="10" height="10"><circle cx="5" cy="5" r="4" fill="none" stroke="#8a8a8a" stroke-width="1.1"/></svg>
<div class="t" style="left:30px;top:744px;color:#e2e2e2">Time Offset</div>
<div class="inp" style="left:177px;top:744px;width:94px;height:16px;background:#2a2a2a"></div>
<div class="t" style="left:181px;top:744px;color:#6a6a6a">S</div>
<div class="t" style="left:195px;top:744px;color:#e6e6e6">0.0</div>
<svg style="left:14px;top:769px" width="10" height="10"><circle cx="5" cy="5" r="4" fill="none" stroke="#8a8a8a" stroke-width="1.1"/></svg>
<div class="t" style="left:30px;top:766px;color:#e2e2e2">Time Scale</div>
<div class="inp" style="left:177px;top:766px;width:94px;height:16px;background:#2a2a2a"></div>
<div class="t" style="left:181px;top:766px;color:#6a6a6a">#</div>
<div class="t" style="left:195px;top:766px;color:#e6e6e6">1.0</div>
<div class="a" style="left:8px;top:556px;width:464px;height:1px;background:#262626"></div>
<div class="a" style="left:8px;top:671px;width:464px;height:1px;background:#262626"></div>
<div class="a" style="left:476px;top:316px;width:10px;height:706px;background:#4a4a4a;border-radius:5px"></div>

<div class="a" style="left:167px;top:481px;width:299px;height:125px;border:3px solid #c0e030"></div>
<div class="a" style="left:177px;top:493px;width:280px;height:108px;background:#2a2a2a;border:1px solid #222"></div>
<div class="t" style="left:284px;top:494px;color:#ececec">Value Offset</div>
<svg style="left:443px;top:497px" width="10" height="10"><path d="M1 1l8 8M9 1l-8 8" stroke="#ccc" stroke-width="1.1"/></svg>
<div class="a" style="left:178px;top:511px;width:278px;height:21px;background:#3a3a3a"></div>
<div class="t" style="left:180px;top:513px;color:#ececec">Use Expression</div>
<div class="inp" style="left:438px;top:513px;width:16px;height:16px;background:#2e2e2e"></div>
<svg style="left:438px;top:513px" width="16" height="16"><path d="M3 8.5l3.2 3.2 6.8-7.5" fill="none" stroke="#3ec46d" stroke-width="2"/></svg>
<div class="a" style="left:180px;top:533px;width:273px;height:65px;background:#262626"></div>
<div class="a" style="left:182px;top:535px;width:18px;height:17px;background:#6ac0a4;border-radius:2px"></div>
<div class="t" style="left:187px;top:535px;color:#333;font-size:11px">#</div>
<div class="t" style="left:207px;top:540px;font-family:'Liberation Mono',monospace;font-size:12.5px;color:#8ab0f0">360<span style="color:#a8acd8">/value</span></div>
<svg style="left:438px;top:538px" width="10" height="10"><path d="M1 1l8 8M9 1l-8 8" stroke="#ccc" stroke-width="1.1"/></svg>
<div class="a" style="left:9px;top:600px;width:303px;height:29px;border:3px solid #c0e030"></div>


<!-- TOOLBOX -->
<div class="a" style="left:494px;top:85px;width:30px;height:495px;background:#3a3a3a"></div>

<!-- toolbox content -->
<div class="a" style="left:503px;top:89px;width:2px;height:2px;background:#888"></div>
<div class="a" style="left:508px;top:89px;width:2px;height:2px;background:#888"></div>
<div class="a" style="left:513px;top:89px;width:2px;height:2px;background:#888"></div>
<div class="a" style="left:495px;top:96px;width:28px;height:28px;background:#141414;border-radius:4px"></div>
<svg style="left:501px;top:99px" width="16" height="20"><path d="M2.5 2v13.5l3.5-3 2.8 5.5 2.2-1-2.7-5.3 4.8-0.2z" fill="none" stroke="#3ec46d" stroke-width="1.4" stroke-linejoin="round"/></svg>
<svg style="left:501px;top:130px" width="16" height="20"><path d="M2.5 2v18l4.5-6.5 9-1.5z" fill="#ddd"/></svg>
<svg style="left:500px;top:161px" width="18" height="18"><path d="M1.5 1.5l10 3 2.5 5-4.5 4.5-5-2.5z" fill="#ddd"/><circle cx="7.5" cy="7.5" r="1.3" fill="#3a3a3a"/><path d="M1.5 1.5l6 6" stroke="#3a3a3a" stroke-width="0.8"/><path d="M11 14l3-3 3 3-3 3z" fill="#ddd"/></svg>
<svg style="left:500px;top:190px" width="18" height="18"><path d="M15 1.5a2 2 0 0 1 1.5 3.5l-10 10-3.5 1 1-3.5z" fill="#ddd"/><path d="M1 17l2-2" stroke="#ddd" stroke-width="1"/></svg>
<svg style="left:498px;top:222px" width="21" height="15"><rect x="1" y="3" width="13" height="11" rx="1" fill="#e0e0e0"/><rect x="3" y="1" width="6" height="2" fill="#e0e0e0"/><circle cx="4" cy="6" r="1.2" fill="#333"/><path d="M14 8l6-4v10l-6-4z" fill="#e0e0e0"/></svg>
<svg style="left:500px;top:251px" width="18" height="18"><path d="M2 16L16 2" stroke="#ccc" stroke-width="1.2"/></svg>
<svg style="left:501px;top:281px" width="16" height="17"><path d="M1 1h14v3.5h-5v11.5h-4v-11.5h-5z" fill="#e0e0e0"/><path d="M7 5h2v11h-2z" fill="#bbb"/></svg>
<svg style="left:499px;top:310px" width="20" height="20"><path d="M2 3l13 2 3 13-16-1z" fill="none" stroke="#ddd" stroke-width="1" stroke-dasharray="2 2"/><path d="M2 2l0 10 2.5-2.5 2 4 1.5-0.8-2-4h3.5z" fill="#ddd"/></svg>
<div class="a" style="left:501px;top:342px;width:15px;height:15px;background:linear-gradient(135deg,#eee,#bbb)"></div>
<div class="a" style="left:500px;top:371px;width:17px;height:17px;background:#e6e6e6;border-radius:50%"></div>
<svg style="left:500px;top:400px" width="18" height="18"><path d="M9 1l8 6-3 9.5h-10l-3-9.5z" fill="#ddd"/></svg>
<svg style="left:500px;top:430px" width="18" height="18"><path d="M9 0.5l2.5 6h6.3l-5 4 1.9 6.5-5.7-3.8-5.7 3.8 1.9-6.5-5-4h6.3z" fill="#ddd"/></svg>
<svg style="left:500px;top:460px" width="18" height="18"><path d="M13.5 4.5a6.5 6.5 0 1 0 2 4.5" fill="none" stroke="#ddd" stroke-width="3"/></svg>
<svg style="left:500px;top:490px" width="18" height="18"><path d="M9 0.5c1 5 3 7.5 8.5 8.5-5.5 1-7.5 3.5-8.5 8.5-1-5-3-7.5-8.5-8.5 5.5-1 7.5-3.5 8.5-8.5z" fill="#ddd"/></svg>
<svg style="left:500px;top:520px" width="18" height="18"><path d="M7.5 0.5h3l0.5 2.5 2 0.9 2.2-1.4 2.1 2.1-1.4 2.2 0.9 2 2.5 0.5v3l-2.5 0.5-0.9 2 1.4 2.2-2.1 2.1-2.2-1.4-2 0.9-0.5 2.5h-3l-0.5-2.5-2-0.9-2.2 1.4-2.1-2.1 1.4-2.2-0.9-2-2.5-0.5v-3l2.5-0.5 0.9-2-1.4-2.2 2.1-2.1 2.2 1.4 2-0.9z" fill="#ddd"/><circle cx="9" cy="9" r="3" fill="#3a3a3a"/></svg>
<svg style="left:502px;top:564px" width="14" height="10"><path d="M1 1l4 4-4 4M7 1l4 4-4 4" fill="none" stroke="#aaa" stroke-width="1.2"/></svg>


<!-- VIEWPORT -->
<div class="a" style="left:530px;top:85px;width:1057px;height:22px;background:#1b1b1b"></div>
<div class="a" style="left:530px;top:85px;width:87px;height:22px;background:#444;border-radius:3px 3px 0 0"></div>
<div class="a" style="left:530px;top:107px;width:1057px;height:451px;background:#000"></div>
<div class="a" style="left:694px;top:127px;width:728px;height:410px;background:#00aeff"></div>
<div class="a" style="left:530px;top:558px;width:1057px;height:22px;background:#3c3c3c"></div>

<!-- viewport content -->
<div class="t" style="left:535px;top:89px;color:#e6e6e6">Composition 4</div>
<div class="a" style="left:914px;top:302px;width:60px;height:60px;background:#4a60d8;border-radius:50%"></div>
<div class="a" style="left:919px;top:296px;width:71px;height:71px;background:#d47ed4;border-radius:50%"></div>
<div class="t" style="left:942px;top:316px;color:#fff;font-size:28px;line-height:32px;transform:scaleX(1.15)">1</div>
<div class="a" style="left:1155px;top:299px;width:65px;height:65px;background:#b2ea90;border-radius:50%"></div>
<div class="a" style="left:1134px;top:295px;width:74px;height:74px;background:#fcd055;border-radius:50%"></div>
<div class="t" style="left:1158px;top:316px;color:#fff;font-size:28px;line-height:32px;letter-spacing:-4px">11</div>
<div class="a" style="left:953px;top:292px;width:80px;height:80px;background:#fcd055;border-radius:50%"></div>
<div class="t" style="left:984px;top:316px;color:#fff;font-size:28px;line-height:32px;transform:scaleX(1.12)">8</div>
<div class="a" style="left:1082px;top:291px;width:82px;height:82px;background:#529ef8;border-radius:50%"></div>
<div class="t" style="left:1116px;top:316px;color:#fff;font-size:28px;line-height:32px;transform:scaleX(1.2)">0</div>
<div class="a" style="left:1014px;top:290px;width:84px;height:84px;background:#fc50c0;border-radius:50%"></div>
<div class="t" style="left:1047px;top:316px;color:#fff;font-size:28px;line-height:32px;transform:scaleX(1.15)">4</div>

<div class="t" style="left:569px;top:459px;color:#fff"><b style="font-weight:normal">Hold S</b> <span style="color:#5c5c5c;mix-blend-mode:difference">Direct Layer Selection</span></div>
<div class="t" style="left:569px;top:473px;color:#fff">Space <span style="color:#5c5c5c;mix-blend-mode:difference">Play/ Stop</span></div>
<div class="t" style="left:569px;top:487px;color:#fff">Space + click + drag <span style="color:#5c5c5c;mix-blend-mode:difference">Pan</span></div>
<div class="t" style="left:569px;top:501px;color:#fff">Alt + click + drag <span style="color:#5c5c5c;mix-blend-mode:difference">Move Pivot Point</span></div>
<div class="t" style="left:569px;top:515px;color:#fff">Shift <span style="color:#5c5c5c;mix-blend-mode:difference">Enable Snapping</span></div>
<div class="t" style="left:998px;top:535px;color:#f0f0f0">Viewport Quality: High</div>

<div class="a" style="left:535px;top:561px;width:78px;height:16px;background:#2a2a2a;border-radius:3px"></div>
<div class="t" style="left:538px;top:561px;color:#e6e6e6">38%</div>
<svg style="left:599px;top:566px" width="10" height="6"><path d="M1 1l4 4 4-4" fill="none" stroke="#ccc" stroke-width="1"/></svg>
<div class="btn" style="left:866px;top:559px;width:100px;height:20px;background:#2e2e2e;border-top-color:#555"></div>
<svg style="left:868px;top:562px" width="96" height="14"><g fill="#d6d6d6">
<rect x="2" y="2" width="2" height="10"/><path d="M13 2v10l-7.5-5z"/>
<path d="M30 2v10l-8-5z"/><rect x="32" y="2" width="2" height="10"/>
<path d="M43 2v10l9-5z"/>
<rect x="62" y="2" width="2" height="10"/><path d="M66 2v10l7.5-5z"/>
<path d="M83 2v10l7.5-5z"/><rect x="92" y="2" width="2" height="10"/>
</g><path d="M18.5 -2v17M38.5 -2v17M58.5 -2v17M78.5 -2v17" stroke="#1e1e1e" stroke-width="1"/></svg>
<div class="btn" style="left:971px;top:559px;width:20px;height:20px;background:#2e2e2e;border-top-color:#555"></div>
<svg style="left:973px;top:562px" width="16" height="14"><path d="M7 3.5h-5.5v7.5h12.5v-5" fill="none" stroke="#d6d6d6" stroke-width="1.3"/><path d="M9 0.5l5.5 3-5.5 3z" fill="#d6d6d6"/></svg>
<div class="btn" style="left:1232px;top:559px;width:37px;height:20px;background:#2e2e2e"></div>
<div class="btn" style="left:1272px;top:559px;width:31px;height:20px;background:#2e2e2e"></div>
<div class="a" style="left:1291px;top:560px;width:1px;height:18px;background:#262626"></div>
<svg style="left:1294px;top:565px" width="7" height="9"><path d="M1 1v7l5-3.5z" fill="none" stroke="#999" stroke-width="1"/></svg>
<div class="btn" style="left:1307px;top:559px;width:31px;height:20px;background:#2e2e2e"></div>
<div class="a" style="left:1326px;top:560px;width:1px;height:18px;background:#262626"></div>
<svg style="left:1329px;top:565px" width="7" height="9"><path d="M1 1v7l5-3.5z" fill="none" stroke="#999" stroke-width="1"/></svg>
<div class="btn" style="left:1342px;top:559px;width:31px;height:20px;background:#2e2e2e"></div>
<div class="a" style="left:1361px;top:560px;width:1px;height:18px;background:#262626"></div>
<svg style="left:1364px;top:565px" width="7" height="9"><path d="M1 1v7l5-3.5z" fill="none" stroke="#999" stroke-width="1"/></svg>
<div class="btn" style="left:1377px;top:559px;width:20px;height:20px;background:#2e2e2e"></div>
<div class="btn" style="left:1400px;top:559px;width:20px;height:20px;background:#2e2e2e"></div>
<div class="btn" style="left:1424px;top:559px;width:31px;height:20px;background:#2e2e2e"></div>
<div class="a" style="left:1443px;top:560px;width:1px;height:18px;background:#262626"></div>
<svg style="left:1446px;top:565px" width="7" height="9"><path d="M1 1v7l5-3.5z" fill="none" stroke="#999" stroke-width="1"/></svg>
<div class="btn" style="left:1459px;top:559px;width:31px;height:20px;background:#2e2e2e"></div>
<div class="a" style="left:1478px;top:560px;width:1px;height:18px;background:#262626"></div>
<svg style="left:1481px;top:565px" width="7" height="9"><path d="M1 1v7l5-3.5z" fill="none" stroke="#999" stroke-width="1"/></svg>
<div class="btn" style="left:1494px;top:559px;width:31px;height:20px;background:#2e2e2e"></div>
<div class="a" style="left:1513px;top:560px;width:1px;height:18px;background:#262626"></div>
<svg style="left:1516px;top:565px" width="7" height="9"><path d="M1 1v7l5-3.5z" fill="none" stroke="#999" stroke-width="1"/></svg>
<div class="btn" style="left:1529px;top:559px;width:31px;height:20px;background:#2e2e2e"></div>
<div class="a" style="left:1548px;top:560px;width:1px;height:18px;background:#262626"></div>
<svg style="left:1551px;top:565px" width="7" height="9"><path d="M1 1v7l5-3.5z" fill="none" stroke="#999" stroke-width="1"/></svg>
<div class="btn" style="left:1564px;top:559px;width:20px;height:20px;background:#2e2e2e"></div>

<svg style="left:1233px;top:563px" width="14" height="12"><path d="M5 1h8v9h-8l-4.5-4.5z" fill="#ddd"/><circle cx="5" cy="5.5" r="1.6" fill="#2e2e2e"/></svg>
<div class="t" style="left:1258px;top:561px;color:#c8d0e0">0</div>
<svg style="left:1275px;top:562px" width="16" height="14"><path d="M1 4.5h3l4-3.5v12l-4-3.5h-3z" fill="#3ec46d"/><path d="M10 4.5a3 3 0 0 1 0 5M12 2.5a6 6 0 0 1 0 9" fill="none" stroke="#3ec46d" stroke-width="1.3"/></svg>
<svg style="left:1310px;top:562px" width="15" height="15"><path d="M6 13.5L2.8 8.5a4.6 4.6 0 0 1 8-4.6L13.5 8" fill="none" stroke="#d8d8d8" stroke-width="2.2"/></svg>
<svg style="left:1345px;top:562px" width="14" height="14"><path d="M4.5 0.5v13M9.5 0.5v13M0.5 4.5h13M0.5 9.5h13" stroke="#ddd" stroke-width="1.2"/></svg>
<svg style="left:1379px;top:563px" width="16" height="12"><path d="M1 1h3v3h-3zM1 5.5h3v5.5h-3z" fill="#3ec46d"/><rect x="5.5" y="1.5" width="9" height="4" fill="none" stroke="#3ec46d" stroke-width="1.2"/><rect x="5" y="7" width="10" height="4" fill="#3ec46d"/></svg>
<svg style="left:1402px;top:564px" width="16" height="10"><path d="M1 1l4 4-4 4M6 1l4 4-4 4M11 1l4 4-4 4" fill="none" stroke="#ddd" stroke-width="1.6"/></svg>
<svg style="left:1427px;top:563px" width="15" height="12"><rect x="1" y="1" width="13" height="9" fill="none" stroke="#ddd" stroke-width="1.3"/><path d="M1 10.5h13" stroke="#ddd" stroke-width="2"/></svg>
<svg style="left:1462px;top:562px" width="15" height="14"><rect x="1" y="1" width="8" height="6" fill="none" stroke="#ccc" stroke-width="1"/><path d="M10 4h2v6M4 8v2h8M14 7v6h-8" fill="none" stroke="#ccc" stroke-width="1"/></svg>
<svg style="left:1497px;top:562px" width="15" height="14"><rect x="1" y="1" width="8" height="8" fill="#ccc"/><rect x="5.5" y="5.5" width="8" height="8" fill="#2e2e2e" stroke="#ddd" stroke-width="1.2"/></svg>
<svg style="left:1532px;top:562px" width="14" height="14"><g fill="#3ec46d"><rect x="0" y="0" width="3.5" height="3.5"/><rect x="7" y="0" width="3.5" height="3.5"/><rect x="3.5" y="3.5" width="3.5" height="3.5"/><rect x="10.5" y="3.5" width="3.5" height="3.5"/><rect x="0" y="7" width="3.5" height="3.5"/><rect x="7" y="7" width="3.5" height="3.5"/><rect x="3.5" y="10.5" width="3.5" height="3.5"/><rect x="10.5" y="10.5" width="3.5" height="3.5"/></g></svg>
<svg style="left:1566px;top:561px" width="16" height="16"><path d="M6.7 0.5h2.6l0.4 2.1 1.7 0.7 1.8-1.2 1.8 1.8-1.2 1.8 0.7 1.7 2.1 0.4v2.6l-2.1 0.4-0.7 1.7 1.2 1.8-1.8 1.8-1.8-1.2-1.7 0.7-0.4 2.1h-2.6l-0.4-2.1-1.7-0.7-1.8 1.2-1.8-1.8 1.2-1.8-0.7-1.7-2.1-0.4v-2.6l2.1-0.4 0.7-1.7-1.2-1.8 1.8-1.8 1.8 1.2 1.7-0.7z" fill="#ddd"/><circle cx="8" cy="8" r="2.6" fill="#2e2e2e"/></svg>


<!-- RIGHT PANEL -->
<div class="a" style="left:1593px;top:85px;width:322px;height:22px;background:#1b1b1b"></div>
<div class="a" style="left:1593px;top:85px;width:40px;height:22px;background:#444;border-radius:3px 3px 0 0"></div>
<div class="a" style="left:1634px;top:85px;width:68px;height:22px;background:#262626;border-radius:3px 3px 0 0"></div>
<div class="a" style="left:1593px;top:107px;width:322px;height:377px;background:#444"></div>
<div class="a" style="left:1593px;top:490px;width:322px;height:22px;background:#1b1b1b"></div>
<div class="a" style="left:1593px;top:490px;width:38px;height:22px;background:#444;border-radius:3px 3px 0 0"></div>
<div class="a" style="left:1593px;top:512px;width:322px;height:68px;background:#444"></div>

<!-- right panel content -->
<div class="t" style="left:1598px;top:89px;color:#e6e6e6">Color</div>
<div class="t" style="left:1639px;top:89px;color:#e6e6e6">Add Layers</div>
<div class="a" style="left:1593px;top:107px;width:322px;height:377px;overflow:hidden">
  <div class="a" style="left:53px;top:-48px;width:200px;height:200px;border-radius:50%;background:conic-gradient(from 0deg,hsl(90,100%,50%),hsl(60,100%,50%) 30deg,hsl(30,100%,50%) 60deg,hsl(0,100%,50%) 90deg,hsl(330,100%,50%) 120deg,hsl(300,100%,50%) 150deg,hsl(270,100%,50%) 180deg,hsl(240,100%,50%) 210deg,hsl(210,100%,50%) 240deg,hsl(180,100%,50%) 270deg,hsl(150,100%,50%) 300deg,hsl(120,100%,50%) 330deg,hsl(90,100%,50%) 360deg)"></div>
  <div class="a" style="left:78px;top:-23px;width:150px;height:150px;border-radius:50%;background:#444"></div>
  <div class="a" style="left:109px;top:9px;width:90px;height:90px;background:linear-gradient(to right,#000,rgba(0,0,0,0)),linear-gradient(to bottom,#fff,#2200ff)"></div>
  <div class="a" style="left:192px;top:62px;width:13px;height:13px;border:1.5px solid #eee;border-radius:50%"></div>
  <div class="a" style="left:111px;top:126px;width:13px;height:13px;border:1.5px solid #eee;border-radius:50%"></div>
  <div class="a" style="left:309px;top:46px;width:10px;height:302px;background:#555;border-radius:5px"></div>
</div>
<div class="a" style="left:1600px;top:273px;width:21px;height:21px;background:#6755ff;border-radius:3px"></div>
<div class="t" style="left:1625px;top:277px;color:#ececec">Medium Slateblue</div>
<div class="btn" style="left:1871px;top:273px;width:21px;height:21px;background:#2e2e2e"></div>
<svg style="left:1875px;top:277px" width="13" height="13"><path d="M1.5 11.5l6-6" stroke="#ccc" stroke-width="1.3"/><path d="M6.5 4.5l2 2" stroke="#ccc" stroke-width="2.5"/><circle cx="10" cy="3" r="2.3" fill="#ccc"/></svg>
<div class="a" style="left:1600px;top:300px;width:50px;height:18px;background:#3c3c3c;border:1px solid #333;border-radius:3px"></div>
<div class="t" style="left:1603px;top:301px;color:#e6e6e6">Hex</div>
<svg style="left:1635px;top:306px" width="10" height="6"><path d="M1 1l4 4 4-4" fill="none" stroke="#bbb" stroke-width="1"/></svg>
<div class="a" style="left:1653px;top:298px;width:240px;height:22px;background:#2a2a2a;border-radius:3px"></div>
<div class="t" style="left:1659px;top:301px;color:#666">#</div>
<div class="t" style="left:1670px;top:301px;color:#ececec">6755ff</div>
<div class="a" style="left:1600px;top:329px;width:236px;height:6px;background:#e0e0e0;border-radius:3px"></div>
<div class="a" style="left:1828px;top:326px;width:12px;height:12px;background:#6fc0a8;border-radius:50%"></div>
<div class="a" style="left:1832px;top:330px;width:4px;height:4px;background:#4a8a78;border-radius:50%"></div>
<div class="a" style="left:1849px;top:324px;width:44px;height:17px;background:#2a2a2a;border-radius:3px"></div>
<div class="t" style="left:1853px;top:325px;color:#555">A</div>
<div class="t" style="left:1866px;top:325px;color:#ececec">255</div>
<div class="a" style="left:1597px;top:346px;width:299px;height:22px;background:#262626;border-radius:3px"></div>
<div class="a" style="left:1599px;top:348px;width:148px;height:20px;background:#444;border-radius:3px 3px 0 0"></div>
<div class="t" style="left:1648px;top:350px;color:#e6e6e6">Swatches</div>
<div class="t" style="left:1793px;top:350px;color:#bdbdbd">Generator</div>
<div class="a" style="left:1598px;top:371px;width:257px;height:18px;background:#555;border-radius:3px"></div>
<div class="a" style="left:1600px;top:372px;width:61px;height:16px;background:#2a2a2a;border-radius:3px"></div>
<svg style="left:1604px;top:374px" width="12" height="12"><path d="M1.5 1v10M4.5 1v10M7 1l3.5 10" stroke="#3ec46d" stroke-width="1.6"/></svg>
<div class="t" style="left:1621px;top:373px;color:#ececec">Library</div>
<svg style="left:1670px;top:374px" width="12" height="12"><path d="M1 2h5M1 4h10v7h-10z" fill="none" stroke="#ccc" stroke-width="1.2"/><path d="M3 6.5h6M3 8.5h6" stroke="#ccc" stroke-width="1"/></svg>
<div class="t" style="left:1686px;top:373px;color:#ececec">Project</div>
<svg style="left:1738px;top:374px" width="12" height="12"><path d="M2 1h5l3 3v7h-8z" fill="none" stroke="#ccc" stroke-width="1.2"/></svg>
<div class="t" style="left:1752px;top:373px;color:#ececec">Scene</div>
<svg style="left:1800px;top:374px" width="12" height="12"><path d="M1 4a3 3 0 0 1 3-3h7v6l-4 4h-3a3 3 0 0 1-3-3z" fill="none" stroke="#ccc" stroke-width="1.2"/></svg>
<div class="t" style="left:1816px;top:373px;color:#ececec">Labels</div>
<div class="a" style="left:1858px;top:371px;width:18px;height:18px;background:#2a2a2a;border-radius:3px"></div>
<svg style="left:1862px;top:375px" width="10" height="10"><path d="M0 0h4v4h-4zM6 0h4v4h-4zM0 6h4v4h-4zM6 6h4v4h-4z" fill="#3ec46d"/></svg>
<svg style="left:1880px;top:375px" width="13" height="10"><path d="M0 1h13M0 5h13M0 9h13" stroke="#ccc" stroke-width="1.2"/></svg>
<div class="a" style="left:1598px;top:393px;width:275px;height:16px;background:#3c3c3c;border:1px solid #333;border-radius:3px"></div>
<div class="t" style="left:1601px;top:394px;color:#ececec">new</div>
<svg style="left:1859px;top:398px" width="10" height="6"><path d="M1 1l4 4 4-4" fill="none" stroke="#bbb" stroke-width="1"/></svg>
<svg style="left:1880px;top:399px" width="13" height="3"><circle cx="1.5" cy="1.5" r="1.2" fill="#ccc"/><circle cx="6.5" cy="1.5" r="1.2" fill="#ccc"/><circle cx="11.5" cy="1.5" r="1.2" fill="#ccc"/></svg>
<div class="a" style="left:1598px;top:410px;width:297px;height:74px;background:#282828"></div>
<div class="a" style="left:1600px;top:412px;width:18px;height:18px;background:#9050f0;border-radius:4px"></div>
<div class="a" style="left:1622px;top:412px;width:18px;height:18px;background:#4a9ef8;border-radius:4px"></div>
<div class="a" style="left:1644px;top:412px;width:18px;height:18px;background:#f87850;border-radius:4px"></div>
<div class="a" style="left:1666px;top:412px;width:18px;height:18px;background:#50f0a8;border-radius:4px"></div>
<div class="a" style="left:1688px;top:412px;width:18px;height:18px;background:#f05060;border-radius:4px"></div>
<div class="a" style="left:1710px;top:412px;width:18px;height:18px;background:#f850c0;border-radius:4px"></div>
<div class="a" style="left:1732px;top:412px;width:18px;height:18px;background:#fcd050;border-radius:4px"></div>
<div class="a" style="left:1754px;top:412px;width:18px;height:18px;background:#4060d8;border-radius:4px"></div>
<div class="a" style="left:1776px;top:412px;width:18px;height:18px;background:#50d8c8;border-radius:4px"></div>
<div class="a" style="left:1798px;top:412px;width:18px;height:18px;background:#d880d8;border-radius:4px"></div>
<div class="a" style="left:1820px;top:412px;width:18px;height:18px;background:#b0e888;border-radius:4px"></div>
<div class="a" style="left:1842px;top:412px;width:18px;height:18px;background:#6655ff;border-radius:4px"></div>

<div class="t" style="left:1597px;top:494px;color:#e6e6e6">Align</div>
<div class="t" style="left:1601px;top:524px;color:#e6e6e6">Alignment</div>
<div class="t" style="left:1601px;top:552px;color:#e6e6e6">Distribution</div>
<div class="a" style="left:1790px;top:522px;width:54px;height:17px;background:#2e2e2e;border:1px solid #222;border-radius:4px"></div>
<div class="a" style="left:1808px;top:522px;width:1px;height:17px;background:#222"></div>
<div class="a" style="left:1826px;top:522px;width:1px;height:17px;background:#222"></div>
<div class="a" style="left:1852px;top:522px;width:54px;height:17px;background:#2e2e2e;border:1px solid #222;border-radius:4px"></div>
<div class="a" style="left:1870px;top:522px;width:1px;height:17px;background:#222"></div>
<div class="a" style="left:1888px;top:522px;width:1px;height:17px;background:#222"></div>
<div class="a" style="left:1790px;top:550px;width:54px;height:17px;background:#2e2e2e;border:1px solid #222;border-radius:4px"></div>
<div class="a" style="left:1808px;top:550px;width:1px;height:17px;background:#222"></div>
<div class="a" style="left:1826px;top:550px;width:1px;height:17px;background:#222"></div>
<svg style="left:1793px;top:525px" width="50" height="12"><g stroke="#ddd" stroke-width="1.3" fill="none"><path d="M1.5 0v12M4 3h5M4 8h7"/><path d="M27 0v12M21 3h12M23 8h8"/><path d="M48.5 0v12M41 3h5M39 8h7"/></g></svg>
<svg style="left:1855px;top:525px" width="50" height="12"><g stroke="#ddd" stroke-width="1.3" fill="none"><path d="M0 1.5h12M4 4v7M8 4v5"/><path d="M18 6h12M22 1v10M26 3v6"/><path d="M36 10.5h12M40 2v7M44 4v5"/></g></svg>
<svg style="left:1793px;top:553px" width="50" height="12"><g stroke="#ddd" stroke-width="1.3" fill="none"><path d="M1.5 0v12M5 2v8M11 0v12"/><path d="M20 1.5h12M21 6h10M20 10.5h12"/><path d="M38 10l3-3M42 6l3-3M46 3l3-3" stroke-dasharray="2 1"/></g></svg>


<!-- SCENE WINDOW -->
<div class="a" style="left:494px;top:586px;width:1421px;height:22px;background:#1b1b1b"></div>
<div class="a" style="left:494px;top:608px;width:1421px;height:22px;background:#2b2b2b"></div>
<div class="a" style="left:494px;top:630px;width:465px;height:42px;background:#3c3c3c"></div>
<div class="a" style="left:494px;top:672px;width:465px;height:220px;background:#333"></div>
<div class="a" style="left:494px;top:892px;width:465px;height:84px;background:#2a2a2a"></div>
<div class="a" style="left:494px;top:976px;width:465px;height:22px;background:#424242"></div>

<!-- scene window tabs -->
<div class="a" style="left:494px;top:586px;width:89px;height:22px;background:#444;border-radius:3px 3px 0 0"></div>
<div class="t" style="left:499px;top:590px;color:#e6e6e6">Scene Window</div>
<div class="a" style="left:584px;top:586px;width:100px;height:22px;background:#262626;border-radius:3px 3px 0 0"></div>
<div class="t" style="left:589px;top:590px;color:#e6e6e6">JavaScript Editor</div>
<div class="a" style="left:685px;top:586px;width:112px;height:22px;background:#262626;border-radius:3px 3px 0 0"></div>
<div class="t" style="left:690px;top:590px;color:#e6e6e6">Dependency Graph</div>
<!-- comp tabs -->
<div class="t" style="left:627px;top:612px;color:#a9b3c3">Composition 1</div>
<svg style="left:834px;top:615px" width="10" height="10"><path d="M1 1l8 8M9 1l-8 8" stroke="#999" stroke-width="1"/></svg>
<div class="a" style="left:852px;top:614px;width:1px;height:11px;background:#999"></div>
<div class="t" style="left:979px;top:612px;color:#a9b3c3">Composition 2</div>
<svg style="left:1186px;top:615px" width="10" height="10"><path d="M1 1l8 8M9 1l-8 8" stroke="#999" stroke-width="1"/></svg>
<div class="a" style="left:1204px;top:614px;width:1px;height:11px;background:#999"></div>
<div class="t" style="left:1332px;top:612px;color:#a9b3c3">Composition 3</div>
<svg style="left:1538px;top:615px" width="10" height="10"><path d="M1 1l8 8M9 1l-8 8" stroke="#999" stroke-width="1"/></svg>
<div class="a" style="left:1557px;top:610px;width:352px;height:20px;background:#444;border-radius:3px 3px 0 0"></div>
<div class="t" style="left:1684px;top:612px;color:#e6e6e6">Composition 4</div>
<svg style="left:1891px;top:615px" width="10" height="10"><path d="M1 1l8 8M9 1l-8 8" stroke="#aaa" stroke-width="1"/></svg>
<!-- search row -->
<div class="a" style="left:497px;top:632px;width:254px;height:20px;background:#2a2a2a;border-radius:10px"></div>
<svg style="left:500px;top:635px" width="14" height="14"><circle cx="5.5" cy="5.5" r="4.3" fill="none" stroke="#ddd" stroke-width="1.2"/><path d="M8.8 8.8l3 3" stroke="#ddd" stroke-width="1.8"/></svg>
<div class="t" style="left:520px;top:634px;color:#8a8a8a">Enter a layer name</div>
<div class="btn" style="left:753px;top:632px;width:20px;height:20px"></div>
<svg style="left:757px;top:636px" width="12" height="12"><path d="M6 1v10M1 6h10" stroke="#eee" stroke-width="1.8"/><path d="M10 11l1.5-1.5v1.5z" fill="#6fc0a8"/></svg>
<div class="btn" style="left:797px;top:632px;width:20px;height:20px"></div>
<svg style="left:800px;top:635px" width="14" height="14"><circle cx="9" cy="5" r="4" fill="#ddd"/><circle cx="6.5" cy="7.5" r="4" fill="#888"/><circle cx="4.5" cy="9.5" r="4" fill="#555"/></svg>
<div class="btn" style="left:819px;top:632px;width:20px;height:20px"></div>
<svg style="left:822px;top:635px" width="14" height="14"><circle cx="2" cy="2" r="1" fill="#ccc"/><circle cx="8" cy="2.5" r="1" fill="#ccc"/><circle cx="2" cy="8" r="1" fill="#ccc"/><path d="M8 5l1 3 3 1-3 1-1 3-1-3-3-1 3-1z" fill="#ddd"/><path d="M12 13l1.5-1.5v1.5z" fill="#6fc0a8"/></svg>
<div class="btn" style="left:841px;top:632px;width:20px;height:20px"></div>
<svg style="left:844px;top:635px" width="14" height="14"><path d="M1 2.5h3M8 2.5h5M1 7h6M10 7h3M1 11.5h3M8 11.5h5" stroke="#ccc" stroke-width="1"/><circle cx="6" cy="2.5" r="1.5" fill="none" stroke="#ccc"/><circle cx="8.5" cy="7" r="1.5" fill="none" stroke="#ccc"/><circle cx="6" cy="11.5" r="1.5" fill="none" stroke="#ccc"/><path d="M12 13l1.5-1.5v1.5z" fill="#6fc0a8"/></svg>
<div class="a" style="left:863px;top:632px;width:94px;height:20px;background:#262626;border-radius:3px"></div>
<div class="t" style="left:867px;top:634px;color:#555">F</div>
<div class="t" style="left:880px;top:634px;color:#ececec">130</div>
<!-- header icons -->
<div class="a" style="left:494px;top:652px;width:465px;height:20px;background:#454545"></div>
<svg style="left:499px;top:656px" width="12" height="13"><path d="M3 6V4a3 3 0 0 1 6 0v2" fill="none" stroke="#ccc" stroke-width="1.3"/><rect x="1.5" y="6" width="9" height="6.5" fill="#ccc"/><circle cx="6" cy="9" r="1" fill="#454545"/></svg>
<svg style="left:517px;top:658px" width="14" height="10"><path d="M1 5c3-5 9-5 12 0-3 5-9 5-12 0z" fill="none" stroke="#ccc" stroke-width="1.1"/><circle cx="7" cy="5" r="1.8" fill="#ccc"/></svg>
<svg style="left:537px;top:656px" width="13" height="13"><path d="M6.5 1l5.5 3v6l-5.5 3-5.5-3v-6z M1 4l5.5 3 5.5-3M6.5 7v6" fill="none" stroke="#ccc" stroke-width="1.1"/></svg>
<svg style="left:555px;top:656px" width="15" height="13"><path d="M1 4.5h2.5l3.5-3v10l-3.5-3h-2.5z" fill="#ccc"/><path d="M9.5 4a3 3 0 0 1 0 5M11.5 2a6 6 0 0 1 0 9" fill="none" stroke="#ccc" stroke-width="1.1"/></svg>
<svg style="left:575px;top:656px" width="13" height="13"><path d="M2 11.5l6-6" stroke="#bbb" stroke-width="1.2"/><path d="M7 4.5l2 2" stroke="#ccc" stroke-width="2.4"/><circle cx="10" cy="3" r="2" fill="#ccc"/></svg>
<svg style="left:593px;top:657px" width="14" height="11"><path d="M4.5 1h8.5v9h-8.5l-4-4.5z" fill="#ccc"/><circle cx="5" cy="5.5" r="1.5" fill="#454545"/></svg>
<div class="t" style="left:649px;top:655px;color:#e6e6e6">Name</div>
<div class="a" style="left:496px;top:674px;width:18px;height:18px;background:#2a2a2a;border-radius:3px"></div>
<div class="a" style="left:515px;top:674px;width:18px;height:18px;background:#2a2a2a;border-radius:3px"></div>
<svg style="left:517px;top:676px" width="14" height="14"><path d="M11.5 5a5 5 0 1 1-2-2.6" fill="none" stroke="#ccc" stroke-width="1.2"/><path d="M4 6.5l2.5 2.5 6-6.5" fill="none" stroke="#ddd" stroke-width="1.5"/></svg>
<div class="a" style="left:573px;top:675px;width:16px;height:16px;background:#72dd98;border-radius:2px"></div>
<svg style="left:593px;top:678px" width="14" height="11"><path d="M4.5 1h8.5v9h-8.5l-4-4.5z" fill="#ccc"/><circle cx="5" cy="5.5" r="1.5" fill="#333"/></svg>
<div class="a" style="left:611px;top:674px;width:32px;height:18px;background:#2e2e2e;border-radius:3px"></div>
<svg style="left:614px;top:681px" width="10" height="6"><path d="M1 1l4 4 4-4" fill="none" stroke="#888" stroke-width="1"/></svg>
<svg style="left:649px;top:675px" width="16" height="16"><path d="M1 7h7v8h-7z" fill="#8ac4f4"/><path d="M5 5V2h10M7 5h8M9 8h6" stroke="#ddd" stroke-width="1.1" fill="none"/></svg>
<div class="t" style="left:667px;top:676px;color:#e8e8e8">Color Array</div>
<div class="a" style="left:905px;top:675px;width:21px;height:16px;background:#2a2a2a;border-radius:3px"></div>
<div class="a" style="left:915px;top:675px;width:1px;height:16px;background:#333"></div>
<svg style="left:907px;top:679px" width="18" height="8"><path d="M1 4l3-3h2.5v6h-2.5z" fill="#d8c070"/><path d="M16.5 4l-3-3h-2.5v6h2.5z" fill="#d050e8"/></svg>
<svg style="left:931px;top:678px" width="10" height="10"><circle cx="5" cy="5" r="4" fill="none" stroke="#888" stroke-width="1.1"/></svg>
<div class="a" style="left:496px;top:696px;width:18px;height:18px;background:#2a2a2a;border-radius:3px"></div>
<div class="a" style="left:515px;top:696px;width:18px;height:18px;background:#2a2a2a;border-radius:3px"></div>
<svg style="left:517px;top:698px" width="14" height="14"><path d="M11.5 5a5 5 0 1 1-2-2.6" fill="none" stroke="#ccc" stroke-width="1.2"/><path d="M4 6.5l2.5 2.5 6-6.5" fill="none" stroke="#ddd" stroke-width="1.5"/></svg>
<div class="a" style="left:573px;top:697px;width:16px;height:16px;background:#ccec7a;border-radius:2px"></div>
<svg style="left:593px;top:700px" width="14" height="11"><path d="M4.5 1h8.5v9h-8.5l-4-4.5z" fill="#ccc"/><circle cx="5" cy="5.5" r="1.5" fill="#333"/></svg>
<svg style="left:668px;top:697px" width="16" height="16"><g stroke="#6fd08a" stroke-width="1"><path d="M1 1l2 2M3 1l-2 2M10 1l2 2M12 1l-2 2M5 6l2 2M7 6l-2 2M1 12l2 2M3 12l-2 2M12 12l2 2M14 12l-2 2"/></g></svg>
<div class="t" style="left:686px;top:698px;color:#e8e8e8">Random [Index]</div>
<div class="a" style="left:905px;top:697px;width:21px;height:16px;background:#2a2a2a;border-radius:3px"></div>
<div class="a" style="left:915px;top:697px;width:1px;height:16px;background:#333"></div>
<svg style="left:907px;top:701px" width="18" height="8"><path d="M1 4l3-3h2.5v6h-2.5z" fill="#707070"/><path d="M16.5 4l-3-3h-2.5v6h2.5z" fill="#d050e8"/></svg>
<svg style="left:931px;top:700px" width="10" height="10"><circle cx="5" cy="5" r="4" fill="none" stroke="#888" stroke-width="1.1"/></svg>
<div class="a" style="left:496px;top:718px;width:18px;height:18px;background:#2a2a2a;border-radius:3px"></div>
<div class="a" style="left:515px;top:718px;width:18px;height:18px;background:#2a2a2a;border-radius:3px"></div>
<svg style="left:517px;top:720px" width="14" height="14"><path d="M11.5 5a5 5 0 1 1-2-2.6" fill="none" stroke="#ccc" stroke-width="1.2"/><path d="M4 6.5l2.5 2.5 6-6.5" fill="none" stroke="#ddd" stroke-width="1.5"/></svg>
<div class="a" style="left:573px;top:719px;width:16px;height:16px;background:#ccec7a;border-radius:2px"></div>
<svg style="left:593px;top:722px" width="14" height="11"><path d="M4.5 1h8.5v9h-8.5l-4-4.5z" fill="#ccc"/><circle cx="5" cy="5.5" r="1.5" fill="#333"/></svg>
<svg style="left:649px;top:719px" width="18" height="14"><path d="M1 8c2-7 3-7 4.5 0s2.5 7 4.5 0 2.5-7 4.5 0" fill="none" stroke="#6fd08a" stroke-width="1.4"/></svg>
<div class="t" style="left:667px;top:720px;color:#e8e8e8">Oscillator [Position.Z] Cosine</div>
<div class="a" style="left:905px;top:719px;width:21px;height:16px;background:#2a2a2a;border-radius:3px"></div>
<div class="a" style="left:915px;top:719px;width:1px;height:16px;background:#333"></div>
<svg style="left:907px;top:723px" width="18" height="8"><path d="M1 4l3-3h2.5v6h-2.5z" fill="#d8c070"/><path d="M16.5 4l-3-3h-2.5v6h2.5z" fill="#d050e8"/></svg>
<div class="a" style="left:905px;top:719px;width:10px;height:16px;border:1px solid #b09a50;border-radius:2px"></div>
<svg style="left:931px;top:722px" width="10" height="10"><circle cx="5" cy="5" r="4" fill="none" stroke="#888" stroke-width="1.1"/></svg>
<div class="a" style="left:496px;top:737px;width:447px;height:20px;background:#484b3e;border-radius:3px"></div>
<div class="a" style="left:496px;top:740px;width:18px;height:18px;background:#2a2a2a;border-radius:3px"></div>
<div class="a" style="left:515px;top:740px;width:18px;height:18px;background:#2a2a2a;border-radius:3px"></div>
<svg style="left:517px;top:742px" width="14" height="14"><path d="M11.5 5a5 5 0 1 1-2-2.6" fill="none" stroke="#ccc" stroke-width="1.2"/><path d="M4 6.5l2.5 2.5 6-6.5" fill="none" stroke="#ddd" stroke-width="1.5"/></svg>
<div class="a" style="left:573px;top:741px;width:16px;height:16px;background:#ccec7a;border-radius:2px"></div>
<svg style="left:593px;top:744px" width="14" height="11"><path d="M4.5 1h8.5v9h-8.5l-4-4.5z" fill="#ccc"/><circle cx="5" cy="5.5" r="1.5" fill="#333"/></svg>
<svg style="left:649px;top:741px" width="18" height="14"><path d="M1 8c2-7 3-7 4.5 0s2.5 7 4.5 0 2.5-7 4.5 0" fill="none" stroke="#6fd08a" stroke-width="1.4"/></svg>
<div class="t" style="left:667px;top:742px;color:#e8e8e8">Oscillator [Position.X] Sine</div>
<div class="a" style="left:905px;top:741px;width:21px;height:16px;background:#2a2a2a;border-radius:3px"></div>
<div class="a" style="left:915px;top:741px;width:1px;height:16px;background:#333"></div>
<svg style="left:907px;top:745px" width="18" height="8"><path d="M1 4l3-3h2.5v6h-2.5z" fill="#d8c070"/><path d="M16.5 4l-3-3h-2.5v6h2.5z" fill="#d050e8"/></svg>
<svg style="left:931px;top:744px" width="10" height="10"><circle cx="5" cy="5" r="4" fill="none" stroke="#888" stroke-width="1.1"/></svg>
<div class="a" style="left:496px;top:762px;width:18px;height:18px;background:#2a2a2a;border-radius:3px"></div>
<div class="a" style="left:515px;top:762px;width:18px;height:18px;background:#2a2a2a;border-radius:3px"></div>
<svg style="left:517px;top:764px" width="14" height="14"><path d="M11.5 5a5 5 0 1 1-2-2.6" fill="none" stroke="#ccc" stroke-width="1.2"/><path d="M4 6.5l2.5 2.5 6-6.5" fill="none" stroke="#ddd" stroke-width="1.5"/></svg>
<div class="a" style="left:573px;top:763px;width:16px;height:16px;background:#ccec7a;border-radius:2px"></div>
<svg style="left:593px;top:766px" width="14" height="11"><path d="M4.5 1h8.5v9h-8.5l-4-4.5z" fill="#ccc"/><circle cx="5" cy="5.5" r="1.5" fill="#333"/></svg>
<svg style="left:649px;top:763px" width="18" height="16"><path d="M2 1v13h14" fill="none" stroke="#ccc" stroke-width="1.1"/><path d="M3 13l9-9M9 4h3v3" fill="none" stroke="#ccc" stroke-width="1.1"/><path d="M13 12l2 2-2 2" fill="none" stroke="#6fd08a" stroke-width="1"/></svg>
<div class="t" style="left:667px;top:764px;color:#e8e8e8">3D Matrix [Duplicator]</div>
<div class="a" style="left:905px;top:763px;width:21px;height:16px;background:#2a2a2a;border-radius:3px"></div>
<div class="a" style="left:915px;top:763px;width:1px;height:16px;background:#333"></div>
<svg style="left:907px;top:767px" width="18" height="8"><path d="M1 4l3-3h2.5v6h-2.5z" fill="#d8c070"/><path d="M16.5 4l-3-3h-2.5v6h2.5z" fill="#d050e8"/></svg>
<div class="a" style="left:905px;top:763px;width:10px;height:16px;border:1px solid #b09a50;border-radius:2px"></div>
<svg style="left:931px;top:766px" width="10" height="10"><circle cx="5" cy="5" r="4" fill="none" stroke="#888" stroke-width="1.1"/></svg>
<div class="a" style="left:496px;top:784px;width:18px;height:18px;background:#2a2a2a;border-radius:3px"></div>
<div class="a" style="left:515px;top:784px;width:18px;height:18px;background:#2a2a2a;border-radius:3px"></div>
<svg style="left:517px;top:788px" width="14" height="10"><path d="M1 5c3-5 9-5 12 0-3 5-9 5-12 0z" fill="none" stroke="#ddd" stroke-width="1.1"/><circle cx="7" cy="5" r="1.8" fill="#ddd"/></svg>
<div class="a" style="left:534px;top:784px;width:18px;height:18px;background:#2a2a2a;border-radius:3px"></div>
<div class="a" style="left:573px;top:785px;width:16px;height:16px;background:#fde47a;border-radius:2px"></div>
<svg style="left:593px;top:788px" width="14" height="11"><path d="M4.5 1h8.5v9h-8.5l-4-4.5z" fill="#ccc"/><circle cx="5" cy="5.5" r="1.5" fill="#333"/></svg>
<svg style="left:649px;top:785px" width="16" height="16"><g fill="#e8d060"><rect x="1" y="1" width="2" height="2"/><rect x="7" y="1" width="2" height="2"/><rect x="13" y="1" width="2" height="2"/><rect x="1" y="7" width="2" height="2"/><rect x="7" y="7" width="2" height="2"/><rect x="13" y="7" width="2" height="2"/><rect x="1" y="13" width="2" height="2"/><rect x="7" y="13" width="2" height="2"/><rect x="13" y="13" width="2" height="2"/></g></svg>
<div class="t" style="left:667px;top:786px;color:#e8e8e8">Duplicator</div>
<div class="a" style="left:905px;top:785px;width:21px;height:16px;background:#2a2a2a;border-radius:3px"></div>
<div class="a" style="left:915px;top:785px;width:1px;height:16px;background:#333"></div>
<svg style="left:907px;top:789px" width="18" height="8"><path d="M1 4l3-3h2.5v6h-2.5z" fill="#d8c070"/><path d="M16.5 4l-3-3h-2.5v6h2.5z" fill="#d050e8"/></svg>
<div class="a" style="left:916px;top:785px;width:10px;height:16px;border:1px solid #a050c0;border-radius:2px"></div>
<svg style="left:931px;top:788px" width="10" height="10"><circle cx="5" cy="5" r="4" fill="none" stroke="#888" stroke-width="1.1"/></svg>
<div class="a" style="left:496px;top:806px;width:18px;height:18px;background:#2a2a2a;border-radius:3px"></div>
<div class="a" style="left:515px;top:806px;width:18px;height:18px;background:#2a2a2a;border-radius:3px"></div>
<div class="a" style="left:534px;top:806px;width:18px;height:18px;background:#2a2a2a;border-radius:3px"></div>
<div class="a" style="left:573px;top:807px;width:16px;height:16px;background:#fde47a;border-radius:2px"></div>
<svg style="left:593px;top:810px" width="14" height="11"><path d="M4.5 1h8.5v9h-8.5l-4-4.5z" fill="#ccc"/><circle cx="5" cy="5.5" r="1.5" fill="#333"/></svg>
<div class="a" style="left:611px;top:806px;width:32px;height:18px;background:#2e2e2e;border-radius:3px"></div>
<svg style="left:614px;top:813px" width="10" height="6"><path d="M1 1l4 4 4-4" fill="none" stroke="#888" stroke-width="1"/></svg>
<svg style="left:649px;top:807px" width="16" height="16"><rect x="1.5" y="1.5" width="13" height="13" fill="none" stroke="#e8d060" stroke-width="1.2" stroke-dasharray="3 2"/></svg>
<div class="t" style="left:667px;top:808px;color:#a0a0a0">Ellipse Shape</div>
<div class="a" style="left:905px;top:807px;width:21px;height:16px;background:#2a2a2a;border-radius:3px"></div>
<div class="a" style="left:915px;top:807px;width:1px;height:16px;background:#333"></div>
<svg style="left:907px;top:811px" width="18" height="8"><path d="M1 4l3-3h2.5v6h-2.5z" fill="#d8c070"/><path d="M16.5 4l-3-3h-2.5v6h2.5z" fill="#d050e8"/></svg>
<svg style="left:931px;top:810px" width="10" height="10"><circle cx="5" cy="5" r="4" fill="none" stroke="#888" stroke-width="1.1"/></svg>
<div class="a" style="left:496px;top:828px;width:18px;height:18px;background:#2a2a2a;border-radius:3px"></div>
<div class="a" style="left:515px;top:828px;width:18px;height:18px;background:#2a2a2a;border-radius:3px"></div>
<svg style="left:517px;top:830px" width="14" height="14"><path d="M11.5 5a5 5 0 1 1-2-2.6" fill="none" stroke="#ccc" stroke-width="1.2"/><path d="M4 6.5l2.5 2.5 6-6.5" fill="none" stroke="#ddd" stroke-width="1.5"/></svg>
<div class="a" style="left:573px;top:829px;width:16px;height:16px;background:#628ee8;border-radius:2px"></div>
<svg style="left:593px;top:832px" width="14" height="11"><path d="M4.5 1h8.5v9h-8.5l-4-4.5z" fill="#ccc"/><circle cx="5" cy="5.5" r="1.5" fill="#333"/></svg>
<svg style="left:668px;top:829px" width="16" height="16"><path d="M1 5h9v10h-9z" fill="#8ac4f4"/><path d="M4.5 8v5" stroke="#333" stroke-width="1.3"/><path d="M12 1l0.8 2 2 0.8-2 0.8-0.8 2-0.8-2-2-0.8 2-0.8z" fill="#ddd"/></svg>
<div class="t" style="left:686px;top:830px;color:#e8e8e8">Index Context [Number]</div>
<div class="a" style="left:905px;top:829px;width:21px;height:16px;background:#2a2a2a;border-radius:3px"></div>
<div class="a" style="left:915px;top:829px;width:1px;height:16px;background:#333"></div>
<svg style="left:907px;top:833px" width="18" height="8"><path d="M1 4l3-3h2.5v6h-2.5z" fill="#707070"/><path d="M16.5 4l-3-3h-2.5v6h2.5z" fill="#d050e8"/></svg>
<svg style="left:931px;top:832px" width="10" height="10"><circle cx="5" cy="5" r="4" fill="none" stroke="#888" stroke-width="1.1"/></svg>
<div class="a" style="left:496px;top:850px;width:18px;height:18px;background:#2a2a2a;border-radius:3px"></div>
<div class="a" style="left:515px;top:850px;width:18px;height:18px;background:#2a2a2a;border-radius:3px"></div>
<svg style="left:517px;top:852px" width="14" height="14"><path d="M11.5 5a5 5 0 1 1-2-2.6" fill="none" stroke="#ccc" stroke-width="1.2"/><path d="M4 6.5l2.5 2.5 6-6.5" fill="none" stroke="#ddd" stroke-width="1.5"/></svg>
<div class="a" style="left:573px;top:851px;width:16px;height:16px;background:#628ee8;border-radius:2px"></div>
<svg style="left:593px;top:854px" width="14" height="11"><path d="M4.5 1h8.5v9h-8.5l-4-4.5z" fill="#ccc"/><circle cx="5" cy="5.5" r="1.5" fill="#333"/></svg>
<svg style="left:668px;top:851px" width="16" height="16"><path d="M1 11h4M6 11h4M11 11h4M1 14h14" stroke="#ccc" stroke-width="1"/><text x="0" y="9" font-size="8" fill="#ccc" font-family="Liberation Sans">abc</text></svg>
<div class="t" style="left:686px;top:852px;color:#e8e8e8">String Generator [String]</div>
<div class="a" style="left:905px;top:851px;width:21px;height:16px;background:#2a2a2a;border-radius:3px"></div>
<div class="a" style="left:915px;top:851px;width:1px;height:16px;background:#333"></div>
<svg style="left:907px;top:855px" width="18" height="8"><path d="M1 4l3-3h2.5v6h-2.5z" fill="#d8c070"/><path d="M16.5 4l-3-3h-2.5v6h2.5z" fill="#d050e8"/></svg>
<svg style="left:931px;top:854px" width="10" height="10"><circle cx="5" cy="5" r="4" fill="none" stroke="#888" stroke-width="1.1"/></svg>
<div class="a" style="left:496px;top:872px;width:18px;height:18px;background:#2a2a2a;border-radius:3px"></div>
<div class="a" style="left:515px;top:872px;width:18px;height:18px;background:#2a2a2a;border-radius:3px"></div>
<svg style="left:517px;top:876px" width="14" height="10"><path d="M1 5c3-5 9-5 12 0-3 5-9 5-12 0z" fill="none" stroke="#555" stroke-width="1.1"/><circle cx="7" cy="5" r="1.8" fill="#555"/></svg>
<div class="a" style="left:534px;top:872px;width:18px;height:18px;background:#2a2a2a;border-radius:3px"></div>
<div class="a" style="left:573px;top:873px;width:16px;height:16px;background:#bc94f8;border-radius:2px"></div>
<svg style="left:593px;top:876px" width="14" height="11"><path d="M4.5 1h8.5v9h-8.5l-4-4.5z" fill="#ccc"/><circle cx="5" cy="5.5" r="1.5" fill="#333"/></svg>
<svg style="left:668px;top:873px" width="16" height="16"><rect x="1.5" y="1.5" width="13" height="13" fill="none" stroke="#ccc" stroke-width="1.1" stroke-dasharray="3 1.5"/><path d="M4.5 4.5h7v2M8 4.5v7.5M6 12h4" fill="none" stroke="#e8d060" stroke-width="1.5"/></svg>
<div class="t" style="left:686px;top:874px;color:#a0a0a0">Cavalry</div>
<div class="a" style="left:905px;top:873px;width:21px;height:16px;background:#2a2a2a;border-radius:3px"></div>
<div class="a" style="left:915px;top:873px;width:1px;height:16px;background:#333"></div>
<svg style="left:907px;top:877px" width="18" height="8"><path d="M1 4l3-3h2.5v6h-2.5z" fill="#d8c070"/><path d="M16.5 4l-3-3h-2.5v6h2.5z" fill="#707070"/></svg>
<svg style="left:931px;top:876px" width="10" height="10"><circle cx="5" cy="5" r="4" fill="none" stroke="#888" stroke-width="1.1"/></svg>

<div class="a" style="left:947px;top:674px;width:10px;height:287px;background:#4a4a4a;border-radius:5px"></div>
<div class="a" style="left:494px;top:958px;width:465px;height:18px;background:#2a2a2a"></div>
<div class="a" style="left:495px;top:964px;width:449px;height:10px;background:#4a4a4a;border-radius:5px"></div>
<div class="btn" style="left:497px;top:978px;width:20px;height:19px"></div>
<svg style="left:500px;top:982px" width="14" height="11"><path d="M4.5 1h8.5v9h-8.5l-4-4.5z" fill="#ccc"/><circle cx="5" cy="5.5" r="1.5" fill="#2e2e2e"/></svg>
<div class="t" style="left:520px;top:980px;color:#e6e6e6">1 selected</div>
<div class="btn" style="left:750px;top:977px;width:20px;height:20px"></div>
<svg style="left:754px;top:981px" width="12" height="12"><rect x="1" y="1" width="10" height="10" fill="none" stroke="#ccc" stroke-width="1.2"/><rect x="4.5" y="4.5" width="3" height="3" fill="#ccc"/></svg>
<div class="a" style="left:773px;top:978px;width:183px;height:18px;background:#4a4a4a;border-radius:4px"></div>
<div class="a" style="left:774px;top:978px;width:86px;height:18px;background:#262626;border-radius:4px"></div>
<svg style="left:780px;top:981px" width="13" height="12"><path d="M1 1.5h11M4 6h8M1 10.5h11" stroke="#3ec46d" stroke-width="2"/></svg>
<div class="t" style="left:796px;top:980px;color:#ececec">Time Editor</div>
<svg style="left:868px;top:980px" width="14" height="14"><path d="M1.5 0v13h12" fill="none" stroke="#bbb" stroke-width="1"/><path d="M3 11c3-1 5-6 10-9" fill="none" stroke="#bbb" stroke-width="1"/></svg>
<div class="t" style="left:885px;top:980px;color:#ececec">Graph Editor</div>


<!-- TIMELINE -->
<div class="a" style="left:963px;top:630px;width:952px;height:346px;background:#2a2a2a"></div>
<div class="a" style="left:963px;top:976px;width:952px;height:22px;background:#424242"></div>

<!-- timeline -->
<div class="a" style="left:963px;top:630px;width:952px;height:346px;background:#1e1e1e"></div>
<div class="a" style="left:966px;top:632px;width:946px;height:22px;background:#262626"></div>
<div class="a" style="left:966px;top:654px;width:946px;height:16px;background:#444"></div>
<div class="a" style="left:975px;top:672px;width:937px;height:292px;background:#2a2a2a"></div>
<svg style="left:966px;top:632px" width="946" height="22"><rect x="8.1" y="14" width="1.2" height="8" fill="#8a8a8a"/><rect x="19.3" y="18" width="1.2" height="4" fill="#6a6a6a"/><rect x="30.4" y="18" width="1.2" height="4" fill="#6a6a6a"/><rect x="41.6" y="18" width="1.2" height="4" fill="#6a6a6a"/><rect x="52.7" y="18" width="1.2" height="4" fill="#6a6a6a"/><rect x="63.9" y="14" width="1.2" height="8" fill="#8a8a8a"/><rect x="75.1" y="18" width="1.2" height="4" fill="#6a6a6a"/><rect x="86.2" y="18" width="1.2" height="4" fill="#6a6a6a"/><rect x="97.4" y="18" width="1.2" height="4" fill="#6a6a6a"/><rect x="108.5" y="18" width="1.2" height="4" fill="#6a6a6a"/><rect x="119.7" y="14" width="1.2" height="8" fill="#8a8a8a"/><rect x="130.9" y="18" width="1.2" height="4" fill="#6a6a6a"/><rect x="142.0" y="18" width="1.2" height="4" fill="#6a6a6a"/><rect x="153.2" y="18" width="1.2" height="4" fill="#6a6a6a"/><rect x="164.3" y="18" width="1.2" height="4" fill="#6a6a6a"/><rect x="175.5" y="14" width="1.2" height="8" fill="#8a8a8a"/><rect x="186.7" y="18" width="1.2" height="4" fill="#6a6a6a"/><rect x="197.8" y="18" width="1.2" height="4" fill="#6a6a6a"/><rect x="209.0" y="18" width="1.2" height="4" fill="#6a6a6a"/><rect x="220.1" y="18" width="1.2" height="4" fill="#6a6a6a"/><rect x="231.3" y="14" width="1.2" height="8" fill="#8a8a8a"/><rect x="242.5" y="18" width="1.2" height="4" fill="#6a6a6a"/><rect x="253.6" y="18" width="1.2" height="4" fill="#6a6a6a"/><rect x="264.8" y="18" width="1.2" height="4" fill="#6a6a6a"/><rect x="275.9" y="18" width="1.2" height="4" fill="#6a6a6a"/><rect x="287.1" y="14" width="1.2" height="8" fill="#8a8a8a"/><rect x="298.3" y="18" width="1.2" height="4" fill="#6a6a6a"/><rect x="309.4" y="18" width="1.2" height="4" fill="#6a6a6a"/><rect x="320.6" y="18" width="1.2" height="4" fill="#6a6a6a"/><rect x="331.7" y="18" width="1.2" height="4" fill="#6a6a6a"/><rect x="342.9" y="14" width="1.2" height="8" fill="#8a8a8a"/><rect x="354.1" y="18" width="1.2" height="4" fill="#6a6a6a"/><rect x="365.2" y="18" width="1.2" height="4" fill="#6a6a6a"/><rect x="376.4" y="18" width="1.2" height="4" fill="#6a6a6a"/><rect x="387.5" y="18" width="1.2" height="4" fill="#6a6a6a"/><rect x="398.7" y="14" width="1.2" height="8" fill="#8a8a8a"/><rect x="409.9" y="18" width="1.2" height="4" fill="#6a6a6a"/><rect x="421.0" y="18" width="1.2" height="4" fill="#6a6a6a"/><rect x="432.2" y="18" width="1.2" height="4" fill="#6a6a6a"/><rect x="443.3" y="18" width="1.2" height="4" fill="#6a6a6a"/><rect x="454.5" y="14" width="1.2" height="8" fill="#8a8a8a"/><rect x="465.7" y="18" width="1.2" height="4" fill="#6a6a6a"/><rect x="476.8" y="18" width="1.2" height="4" fill="#6a6a6a"/><rect x="488.0" y="18" width="1.2" height="4" fill="#6a6a6a"/><rect x="499.1" y="18" width="1.2" height="4" fill="#6a6a6a"/><rect x="510.3" y="14" width="1.2" height="8" fill="#8a8a8a"/><rect x="521.5" y="18" width="1.2" height="4" fill="#6a6a6a"/><rect x="532.6" y="18" width="1.2" height="4" fill="#6a6a6a"/><rect x="543.8" y="18" width="1.2" height="4" fill="#6a6a6a"/><rect x="554.9" y="18" width="1.2" height="4" fill="#6a6a6a"/><rect x="566.1" y="14" width="1.2" height="8" fill="#8a8a8a"/><rect x="577.3" y="18" width="1.2" height="4" fill="#6a6a6a"/><rect x="588.4" y="18" width="1.2" height="4" fill="#6a6a6a"/><rect x="599.6" y="18" width="1.2" height="4" fill="#6a6a6a"/><rect x="610.7" y="18" width="1.2" height="4" fill="#6a6a6a"/><rect x="621.9" y="14" width="1.2" height="8" fill="#8a8a8a"/><rect x="633.1" y="18" width="1.2" height="4" fill="#6a6a6a"/><rect x="644.2" y="18" width="1.2" height="4" fill="#6a6a6a"/><rect x="655.4" y="18" width="1.2" height="4" fill="#6a6a6a"/><rect x="666.5" y="18" width="1.2" height="4" fill="#6a6a6a"/><rect x="677.7" y="14" width="1.2" height="8" fill="#8a8a8a"/><rect x="688.9" y="18" width="1.2" height="4" fill="#6a6a6a"/><rect x="700.0" y="18" width="1.2" height="4" fill="#6a6a6a"/><rect x="711.2" y="18" width="1.2" height="4" fill="#6a6a6a"/><rect x="722.3" y="18" width="1.2" height="4" fill="#6a6a6a"/><rect x="733.5" y="14" width="1.2" height="8" fill="#8a8a8a"/><rect x="744.7" y="18" width="1.2" height="4" fill="#6a6a6a"/><rect x="755.8" y="18" width="1.2" height="4" fill="#6a6a6a"/><rect x="767.0" y="18" width="1.2" height="4" fill="#6a6a6a"/><rect x="778.1" y="18" width="1.2" height="4" fill="#6a6a6a"/><rect x="789.3" y="14" width="1.2" height="8" fill="#8a8a8a"/><rect x="800.5" y="18" width="1.2" height="4" fill="#6a6a6a"/><rect x="811.6" y="18" width="1.2" height="4" fill="#6a6a6a"/><rect x="822.8" y="18" width="1.2" height="4" fill="#6a6a6a"/><rect x="833.9" y="18" width="1.2" height="4" fill="#6a6a6a"/><rect x="845.1" y="14" width="1.2" height="8" fill="#8a8a8a"/><rect x="856.3" y="18" width="1.2" height="4" fill="#6a6a6a"/><rect x="867.4" y="18" width="1.2" height="4" fill="#6a6a6a"/><rect x="878.6" y="18" width="1.2" height="4" fill="#6a6a6a"/><rect x="889.7" y="18" width="1.2" height="4" fill="#6a6a6a"/><rect x="900.9" y="14" width="1.2" height="8" fill="#8a8a8a"/><rect x="912.1" y="18" width="1.2" height="4" fill="#6a6a6a"/><rect x="923.2" y="18" width="1.2" height="4" fill="#6a6a6a"/><rect x="934.4" y="18" width="1.2" height="4" fill="#6a6a6a"/></svg>
<div class="t" style="left:934.6px;width:80px;text-align:center;top:631px;color:#e0e0e0">0</div>
<div class="t" style="left:990.4px;width:80px;text-align:center;top:631px;color:#e0e0e0">15</div>
<div class="t" style="left:1046.2px;width:80px;text-align:center;top:631px;color:#e0e0e0">30</div>
<div class="t" style="left:1102.0px;width:80px;text-align:center;top:631px;color:#e0e0e0">45</div>
<div class="t" style="left:1157.8px;width:80px;text-align:center;top:631px;color:#e0e0e0">60</div>
<div class="t" style="left:1213.6px;width:80px;text-align:center;top:631px;color:#e0e0e0">75</div>
<div class="t" style="left:1269.4px;width:80px;text-align:center;top:631px;color:#e0e0e0">90</div>
<div class="t" style="left:1325.2px;width:80px;text-align:center;top:631px;color:#e0e0e0">105</div>
<div class="t" style="left:1381.0px;width:80px;text-align:center;top:631px;color:#e0e0e0">120</div>
<div class="t" style="left:1436.8px;width:80px;text-align:center;top:631px;color:#e0e0e0">135</div>
<div class="t" style="left:1492.6px;width:80px;text-align:center;top:631px;color:#e0e0e0">150</div>
<div class="t" style="left:1548.4px;width:80px;text-align:center;top:631px;color:#e0e0e0">165</div>
<div class="t" style="left:1604.2px;width:80px;text-align:center;top:631px;color:#e0e0e0">180</div>
<div class="t" style="left:1660.0px;width:80px;text-align:center;top:631px;color:#e0e0e0">195</div>
<div class="t" style="left:1715.8px;width:80px;text-align:center;top:631px;color:#e0e0e0">210</div>
<div class="t" style="left:1771.6px;width:80px;text-align:center;top:631px;color:#e0e0e0">225</div>
<div class="t" style="left:1827.4px;width:80px;text-align:center;top:631px;color:#e0e0e0">240</div>
<div class="a" style="left:970px;top:653px;width:5px;height:18px;background:#6fc0a8;border-radius:2px"></div>
<div class="a" style="left:1905px;top:654px;width:5px;height:17px;background:#6fc0a8;border-radius:2px"></div>
<div class="a" style="left:975px;top:674px;width:929px;height:18px;background:repeating-linear-gradient(-45deg,#63c98b 0px,#63c98b 11px,#8ef2b6 11px,#8ef2b6 12.5px,#72dd9a 12.5px,#72dd9a 23.2px,#8ef2b6 23.2px,#8ef2b6 24.7px);border-radius:3px;"></div>
<div class="t" style="left:983px;top:675px;color:#222">Color Array</div>
<div class="a" style="left:975px;top:696px;width:929px;height:18px;background:repeating-linear-gradient(-45deg,#b9d971 0px,#b9d971 11px,#e2f898 11px,#e2f898 12.5px,#ccec80 12.5px,#ccec80 23.2px,#e2f898 23.2px,#e2f898 24.7px);border-radius:3px;"></div>
<div class="t" style="left:983px;top:697px;color:#222">Random [Index]</div>
<div class="a" style="left:975px;top:718px;width:929px;height:18px;background:repeating-linear-gradient(-45deg,#b9d971 0px,#b9d971 11px,#e2f898 11px,#e2f898 12.5px,#ccec80 12.5px,#ccec80 23.2px,#e2f898 23.2px,#e2f898 24.7px);border-radius:3px;"></div>
<div class="t" style="left:983px;top:719px;color:#222">Oscillator [Position.Z] Cosine</div>
<div class="a" style="left:975px;top:740px;width:929px;height:18px;background:radial-gradient(circle,rgba(140,190,70,0.75) 1px,transparent 1.3px) 0 0/3px 3px,repeating-linear-gradient(-45deg,#d8f090 0px,#d8f090 12px,#e6f8a8 12px,#e6f8a8 24.7px);border-radius:3px;border:1px solid #f0f0f0;"></div>
<div class="t" style="left:983px;top:741px;color:#222">Oscillator [Position.X] Sine</div>
<div class="a" style="left:975px;top:762px;width:929px;height:18px;background:repeating-linear-gradient(-45deg,#b9d971 0px,#b9d971 11px,#e2f898 11px,#e2f898 12.5px,#ccec80 12.5px,#ccec80 23.2px,#e2f898 23.2px,#e2f898 24.7px);border-radius:3px;"></div>
<div class="t" style="left:983px;top:763px;color:#222">3D Matrix [Duplicator]</div>
<div class="a" style="left:975px;top:784px;width:929px;height:18px;background:#fee47a;border-radius:3px;"></div>
<div class="t" style="left:983px;top:785px;color:#222">Duplicator</div>
<div class="a" style="left:975px;top:806px;width:929px;height:18px;background:#fee47a;border-radius:3px;"></div>
<div class="t" style="left:983px;top:807px;color:#222">Ellipse Shape</div>
<div class="a" style="left:975px;top:828px;width:929px;height:18px;background:repeating-linear-gradient(-45deg,#5a84d6 0px,#5a84d6 11px,#80acff 11px,#80acff 12.5px,#6a96ec 12.5px,#6a96ec 23.2px,#80acff 23.2px,#80acff 24.7px);border-radius:3px;"></div>
<div class="t" style="left:983px;top:829px;color:#fff">Index Context [Number]</div>
<div class="a" style="left:975px;top:850px;width:929px;height:18px;background:repeating-linear-gradient(-45deg,#5a84d6 0px,#5a84d6 11px,#80acff 11px,#80acff 12.5px,#6a96ec 12.5px,#6a96ec 23.2px,#80acff 23.2px,#80acff 24.7px);border-radius:3px;"></div>
<div class="t" style="left:983px;top:851px;color:#fff">String Generator [String]</div>
<div class="a" style="left:975px;top:872px;width:929px;height:18px;background:#b894f8;border-radius:3px;"></div>
<div class="t" style="left:983px;top:873px;color:#fff">Cavalry</div>
<div class="a" style="left:1458px;top:650px;width:1px;height:310px;background:#6fc0a8"></div>
<svg style="left:1450px;top:642px" width="17" height="12"><path d="M1 1h15l-7.5 10z" fill="#6fc0a8"/></svg>
<div class="a" style="left:963px;top:958px;width:952px;height:18px;background:#2a2a2a"></div>
<div class="a" style="left:967px;top:964px;width:945px;height:10px;background:#4a4a4a;border-radius:5px"></div>
<div class="btn" style="left:969px;top:978px;width:18px;height:19px"></div>
<svg style="left:972px;top:981px" width="13" height="13"><path d="M1 1.5h11M1 5h4M7 5h5M1 8.5h11M3 11.5h2M7 11.5h3" stroke="#ccc" stroke-width="1.3"/><path d="M11 13l1.5-1.5v1.5z" fill="#6fc0a8"/></svg>
<div class="a" style="left:990px;top:979px;width:150px;height:16px;background:#2a2a2a;border-radius:3px"></div>
<div class="t" style="left:992px;top:980px;color:#ececec">Default Keyframe Layer</div>
<div class="a" style="left:1146px;top:979px;width:69px;height:16px;background:#2a2a2a;border-radius:3px"></div>
<div class="t" style="left:1150px;top:980px;color:#444">F</div>
<div class="t" style="left:1163px;top:980px;color:#ddd">-</div>
<div class="t" style="left:1222px;top:980px;color:#e6e6e6">Align:</div>
<div class="btn" style="left:1259px;top:978px;width:53px;height:18px"></div>
<div class="a" style="left:1276px;top:979px;width:1px;height:16px;background:#262626"></div>
<div class="a" style="left:1294px;top:979px;width:1px;height:16px;background:#262626"></div>
<svg style="left:1261px;top:980px" width="50" height="14"><g stroke="#ddd" stroke-width="1.1"><path d="M1.5 1v12M4 4h3M4 10h8M25.5 1v12M20 4h3M28 4h3M20 10h12M47.5 1v12M41 4h3M38 10h8"/></g><g fill="#6fc0a8"><circle cx="5" cy="4" r="1"/><circle cx="25.5" cy="7" r="1"/><circle cx="44" cy="4" r="1"/></g></svg>
<div class="btn" style="left:1315px;top:978px;width:18px;height:18px"></div>
<svg style="left:1317px;top:980px" width="14" height="14"><rect x="1.5" y="1.5" width="11" height="11" fill="none" stroke="#bbb" stroke-width="1" stroke-dasharray="2 1"/><circle cx="7" cy="7" r="1.2" fill="#ddd"/></svg>
<div class="btn" style="left:1337px;top:978px;width:31px;height:18px"></div>
<div class="a" style="left:1356px;top:979px;width:1px;height:16px;background:#262626"></div>
<svg style="left:1340px;top:980px" width="15" height="15"><path d="M6 13.5L2.8 8.5a4.6 4.6 0 0 1 8-4.6L13.5 8" fill="none" stroke="#d8d8d8" stroke-width="2.2"/></svg>
<svg style="left:1359px;top:983px" width="7" height="9"><path d="M1 1v7l5-3.5z" fill="none" stroke="#999" stroke-width="1"/></svg>
<div class="btn" style="left:1371px;top:978px;width:31px;height:18px"></div>
<div class="a" style="left:1390px;top:979px;width:1px;height:16px;background:#262626"></div>
<svg style="left:1374px;top:980px" width="14" height="14"><path d="M0 7h3M5 4v6M8 1v12M11 7h3" stroke="#ccc" stroke-width="1"/></svg>
<svg style="left:1393px;top:983px" width="7" height="9"><path d="M1 1v7l5-3.5z" fill="none" stroke="#999" stroke-width="1"/></svg>
<svg style="left:1742px;top:980px" width="14" height="14"><circle cx="6" cy="6" r="5" fill="none" stroke="#ccc" stroke-width="1.1"/><path d="M3.5 6h5M10 10l3 3" stroke="#ccc" stroke-width="1.2"/></svg>
<div class="a" style="left:1766px;top:985px;width:115px;height:4px;background:#3a3a3a;border-radius:2px"></div>
<div class="a" style="left:1761px;top:981px;width:12px;height:12px;background:#6fc0a8;border-radius:50%"></div>
<div class="a" style="left:1765px;top:985px;width:4px;height:4px;background:#4a8a78;border-radius:50%"></div>
<svg style="left:1886px;top:980px" width="14" height="14"><circle cx="6" cy="6" r="5" fill="none" stroke="#ccc" stroke-width="1.1"/><path d="M3.5 6h5M6 3.5v5M10 10l3 3" stroke="#ccc" stroke-width="1.2"/></svg>


<!-- MESSAGE BAR -->
<div class="a" style="left:494px;top:1004px;width:1421px;height:22px;background:#3a3a3a"></div>

<!-- message bar -->
<div class="a" style="left:498px;top:1010px;width:2px;height:2px;background:#888"></div>
<div class="a" style="left:498px;top:1014px;width:2px;height:2px;background:#888"></div>
<div class="a" style="left:498px;top:1018px;width:2px;height:2px;background:#888"></div>
<div class="btn" style="left:507px;top:1006px;width:18px;height:19px;background:#2a2a2a"></div>
<svg style="left:509px;top:1008px" width="14" height="14"><path d="M1 1h11v8h-3l2 3-4-3h-6z" fill="#ddd"/><path d="M3 3h7M3 5h7M3 7h7" stroke="#2a2a2a" stroke-width="0.9"/></svg>
<div class="a" style="left:528px;top:1008px;width:18px;height:14px;background:#d87878;border-radius:2px"></div>
<div class="t" style="left:533px;top:1008px;color:#222">2</div>
<div class="a" style="left:554px;top:1012px;width:6px;height:6px;background:#d87878;border-radius:50%"></div>
<div class="t" style="left:565px;top:1008px;color:#ececec;letter-spacing:-0.1px">Attribute Expression Error: L1:1 ERR198 - Undefined symbol: 'index'</div>
<div class="t" style="left:1482px;top:1008px;color:#e0e0e0;font-style:italic;font-size:11px;letter-spacing:-0.25px">Click to see next message</div>
<div class="a" style="left:1610px;top:1006px;width:80px;height:18px;background:#d6bf72;border-radius:2px"></div>
<div class="t" style="left:1616px;top:1008px;color:#333;letter-spacing:-0.3px">Feedback</div>
<svg style="left:1671px;top:1007px" width="13" height="16"><path d="M1 1h8l3 3v11h-11z" fill="#f0f0f0"/><path d="M4 12l6-6 1.5 1.5-6 6z" fill="#f08040"/></svg>
<div class="a" style="left:1693px;top:1006px;width:109px;height:18px;background:#3ec46d;border-radius:2px"></div>
<div class="t" style="left:1698px;top:1008px;color:#222">Upgrade to Pro</div>
<svg style="left:1784px;top:1009px" width="14" height="12"><path d="M2 5c0-3 3-3 4 0v6h-5z M12 5c0-3-3-3-4 0v6h5z" fill="#f8c030"/></svg>
<div class="a" style="left:1805px;top:1006px;width:106px;height:18px;background:#3fa8ea;border-radius:2px"></div>
<div class="t" style="left:1810px;top:1008px;color:#222;letter-spacing:-0.25px">Tips and Tricks</div>
<svg style="left:1890px;top:1008px" width="14" height="14"><path d="M13 1c-5 0-8 3-9 7l2 2c4-1 7-4 7-9z" fill="#f0f0f0"/><circle cx="9" cy="5" r="1.4" fill="#4070d0"/><path d="M4 8l-3 1 2 2zM6 10l-1 3-2-2z" fill="#e04040"/></svg>


</body></html>
